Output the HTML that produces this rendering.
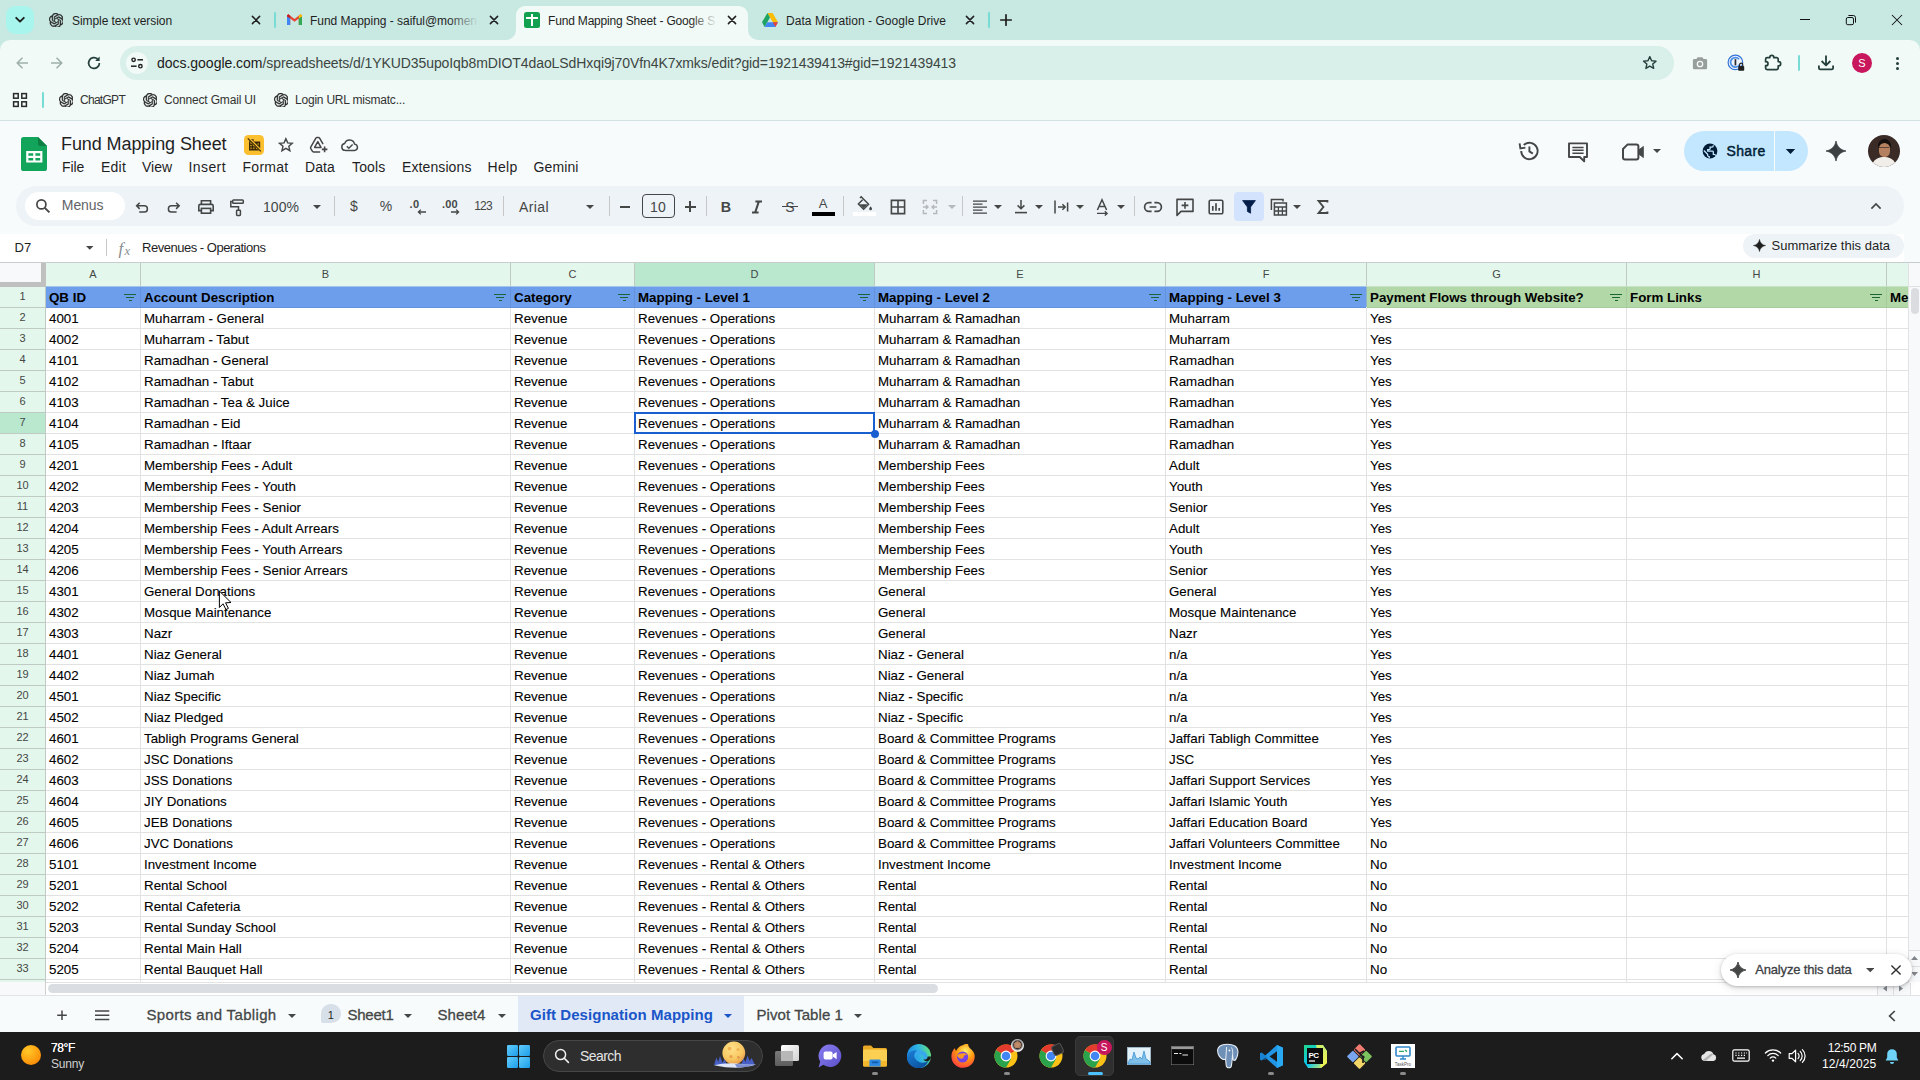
<!DOCTYPE html>
<html><head><meta charset="utf-8"><title>Fund Mapping Sheet - Google Sheets</title>
<style>
html,body{margin:0;padding:0;}
body{width:1920px;height:1080px;overflow:hidden;position:relative;background:#fff;font-family:"Liberation Sans",sans-serif;}
div,svg,.t{position:absolute;}
.t{white-space:pre;line-height:normal;}
.c{font-size:13.333px;color:#000;-webkit-text-stroke:0.1px #000;}
.h{font-size:13.333px;color:#000;font-weight:700;}
.n{font-size:11px;color:#444746;}
</style></head>
<body>
<div style="left:0px;top:0px;width:1920px;height:54px;background:#c8e8e2;"></div>
<div style="left:0px;top:40px;width:1920px;height:80px;background:#f1faf6;border-radius:10px 10px 0 0;"></div>
<div style="left:6px;top:6px;width:28px;height:28px;background:#a8f5ee;border-radius:9px;"></div>
<svg style="left:13px;top:14px;" width="14" height="12" viewBox="0 0 14 12"><path d="M3.2 3.8 L7 7.6 L10.8 3.8" fill="none" stroke="#1f1f1f" stroke-width="1.9" stroke-linecap="round" stroke-linejoin="round"/></svg>
<svg style="left:48.6px;top:12.6px;" width="14.8" height="14.8" viewBox="0 0 24 24"><path d="M22.2819 9.8211a5.9847 5.9847 0 0 0-.5157-4.9108 6.0462 6.0462 0 0 0-6.5098-2.9A6.0651 6.0651 0 0 0 4.9807 4.1818a5.9847 5.9847 0 0 0-3.9977 2.9 6.0462 6.0462 0 0 0 .7427 7.0966 5.98 5.98 0 0 0 .511 4.9107 6.051 6.051 0 0 0 6.5146 2.9001A5.9847 5.9847 0 0 0 13.2599 24a6.0557 6.0557 0 0 0 5.7718-4.2058 5.9894 5.9894 0 0 0 3.9977-2.9001 6.0557 6.0557 0 0 0-.7475-7.0729zm-9.022 12.6081a4.4755 4.4755 0 0 1-2.8764-1.0408l.1419-.0804 4.7783-2.7582a.7948.7948 0 0 0 .3927-.6813v-6.7369l2.02 1.1686a.071.071 0 0 1 .038.052v5.5826a4.504 4.504 0 0 1-4.4945 4.4944zm-9.6607-4.1254a4.4708 4.4708 0 0 1-.5346-3.0137l.142.0852 4.783 2.7582a.7712.7712 0 0 0 .7806 0l5.8428-3.3685v2.3324a.0804.0804 0 0 1-.0332.0615L9.74 19.9502a4.4992 4.4992 0 0 1-6.1408-1.6464zM2.3408 7.8956a4.485 4.485 0 0 1 2.3655-1.9728V11.6a.7664.7664 0 0 0 .3879.6765l5.8144 3.3543-2.0201 1.1685a.0757.0757 0 0 1-.071 0l-4.8303-2.7865A4.504 4.504 0 0 1 2.3408 7.872zm16.5963 3.8558L13.1038 8.364 15.1192 7.2a.0757.0757 0 0 1 .071 0l4.8303 2.7913a4.4944 4.4944 0 0 1-.6765 8.1042v-5.6772a.79.79 0 0 0-.407-.667zm2.0107-3.0231l-.142-.0852-4.7735-2.7818a.7759.7759 0 0 0-.7854 0L9.409 9.2297V6.8974a.0662.0662 0 0 1 .0284-.0615l4.8303-2.7866a4.4992 4.4992 0 0 1 6.6802 4.66zM8.3065 12.863l-2.02-1.1638a.0804.0804 0 0 1-.038-.0567V6.0742a4.4992 4.4992 0 0 1 7.3757-3.4537l-.142.0805L8.704 5.459a.7948.7948 0 0 0-.3927.6813zm1.0976-2.3654l2.602-1.4998 2.6069 1.4998v2.9994l-2.5974 1.4997-2.6067-1.4997Z" fill="#2b2b2b" stroke="#2b2b2b" stroke-width="0.55"/></svg>
<span class="t" style="left:72px;top:14px;font-size:12px;color:#1f1f1f;letter-spacing:-0.072px;">Simple text version</span>
<svg style="left:250px;top:14px;" width="12" height="12" viewBox="0 0 12 12"><path d="M2.4 2.4 L9.6 9.6 M9.6 2.4 L2.4 9.6" stroke="#1f1f1f" stroke-width="1.5" stroke-linecap="round"/></svg>
<div style="left:274px;top:12px;width:2px;height:16px;background:#78dbd4;border-radius:1px;"></div>
<svg style="left:287px;top:14px;" width="15" height="12" viewBox="0 0 15 12"><path d="M0 1.2 L0 11 L3.2 11 L3.2 4.6 L7.5 7.8 L11.8 4.6 L11.8 11 L15 11 L15 1.2 L13.6 0.3 L7.5 4.9 L1.4 0.3 Z" fill="#ea4335"/><rect x="0" y="2.4" width="3.2" height="8.6" fill="#4285f4"/><rect x="11.8" y="2.4" width="3.2" height="8.6" fill="#34a853"/><path d="M0 1.2 L1.4 0.3 L3.2 1.7 L3.2 4.6 L0 2.4Z" fill="#c5221f"/><path d="M15 1.2 L13.6 0.3 L11.8 1.7 L11.8 4.6 L15 2.4Z" fill="#fbbc04"/></svg>
<span class="t" style="left:310px;top:14px;font-size:12px;color:#1f1f1f;letter-spacing:-0.022px;">Fund Mapping - saiful@momen</span>
<div style="left:448px;top:8px;width:32px;height:24px;background:linear-gradient(90deg,rgba(200,232,226,0),#c8e8e2 95%);"></div>
<svg style="left:488px;top:14px;" width="12" height="12" viewBox="0 0 12 12"><path d="M2.4 2.4 L9.6 9.6 M9.6 2.4 L2.4 9.6" stroke="#1f1f1f" stroke-width="1.5" stroke-linecap="round"/></svg>
<div style="left:516px;top:6px;width:232px;height:34px;background:#f1faf6;border-radius:9px 9px 0 0;"></div>
<svg style="left:506px;top:30px;" width="10" height="10" viewBox="0 0 10 10"><path d="M10 0 L10 10 L0 10 A10 10 0 0 0 10 0Z" fill="#f1faf6"/></svg>
<svg style="left:748px;top:30px;" width="10" height="10" viewBox="0 0 10 10"><path d="M0 0 L0 10 L10 10 A10 10 0 0 1 0 0Z" fill="#f1faf6"/></svg>
<div style="left:524px;top:12px;width:16px;height:16px;background:#12a150;border-radius:2.5px;"></div>
<div style="left:530.8px;top:14px;width:2.3px;height:12px;background:#fff;"></div>
<div style="left:526.2px;top:16.7px;width:11.5px;height:2.2px;background:#fff;"></div>
<span class="t" style="left:548px;top:14px;font-size:12px;color:#1f1f1f;letter-spacing:-0.176px;">Fund Mapping Sheet - Google S</span>
<div style="left:690px;top:8px;width:30px;height:24px;background:linear-gradient(90deg,rgba(241,250,246,0),#f1faf6 92%);"></div>
<svg style="left:726px;top:14px;" width="12" height="12" viewBox="0 0 12 12"><path d="M2.4 2.4 L9.6 9.6 M9.6 2.4 L2.4 9.6" stroke="#1f1f1f" stroke-width="1.5" stroke-linecap="round"/></svg>
<svg style="left:762px;top:13px;" width="16" height="14" viewBox="0 0 16 14"><path d="M5.4 0 L10.6 0 L16 9.3 L10.8 9.3Z" fill="#fbbc04"/><path d="M5.4 0 L0 9.3 L2.65 14 L8 4.6Z" fill="#1ea362"/><path d="M2.65 14 L13.35 14 L16 9.3 L5.35 9.3Z" fill="#4285f4"/><path d="M10.8 9.3 L16 9.3 L13.35 14Z" fill="#ea4335"/></svg>
<span class="t" style="left:786px;top:14px;font-size:12px;color:#1f1f1f;letter-spacing:0.044px;">Data Migration - Google Drive</span>
<svg style="left:964px;top:14px;" width="12" height="12" viewBox="0 0 12 12"><path d="M2.4 2.4 L9.6 9.6 M9.6 2.4 L2.4 9.6" stroke="#1f1f1f" stroke-width="1.5" stroke-linecap="round"/></svg>
<div style="left:988px;top:12px;width:2px;height:16px;background:#78dbd4;border-radius:1px;"></div>
<svg style="left:999px;top:13px;" width="14" height="14" viewBox="0 0 14 14"><path d="M7 1.8 V12.2 M1.8 7 H12.2" stroke="#1f1f1f" stroke-width="1.7" stroke-linecap="round"/></svg>
<div style="left:1800px;top:19px;width:10px;height:1px;background:#111;"></div>
<svg style="left:1844px;top:13px;" width="14" height="14" viewBox="1844 13 14 14"><rect x="1846.3" y="17.5" width="7.2" height="7.2" rx="1.5" fill="none" stroke="#111" stroke-width="1"/><path d="M1848.4 15.5 H1853.3 A2.2 2.2 0 0 1 1855.5 17.7 V22.6" fill="none" stroke="#111" stroke-width="1"/></svg>
<svg style="left:1890px;top:13px;" width="14" height="14" viewBox="1890 13 14 14"><path d="M1892 15 L1902 25 M1902 15 L1892 25" stroke="#111" stroke-width="1.05"/></svg>
<svg style="left:16px;top:57px;" width="12" height="12" viewBox="0 0 12 12"><path d="M12 6 H1.5 M6 1.2 L1.2 6 L6 10.8" fill="none" stroke="#9fb0ab" stroke-width="1.6" stroke-linejoin="round" stroke-linecap="round"/></svg>
<svg style="left:51px;top:57px;" width="12" height="12" viewBox="0 0 12 12"><path d="M0 6 H10.5 M6 1.2 L10.8 6 L6 10.8" fill="none" stroke="#9fb0ab" stroke-width="1.6" stroke-linejoin="round" stroke-linecap="round"/></svg>
<svg style="left:86px;top:55px;" width="16" height="16" viewBox="0 0 16 16"><path d="M13.4 8 A5.4 5.4 0 1 1 11.6 4" fill="none" stroke="#243f3b" stroke-width="1.7"/><path d="M13.6 1.6 V6 H9.2Z" fill="#243f3b"/></svg>
<div style="left:120px;top:46px;width:1553.5px;height:34px;background:#d9efe9;border-radius:17px;"></div>
<div style="left:126px;top:52px;width:22px;height:22px;background:#f1faf6;border-radius:11px;"></div>
<svg style="left:130px;top:56px;" width="14" height="14" viewBox="0 0 14 14"><circle cx="3.6" cy="3.8" r="1.7" fill="none" stroke="#1f1f1f" stroke-width="1.4"/><path d="M7.4 3.8 H13" stroke="#1f1f1f" stroke-width="1.5"/><circle cx="10.4" cy="10.2" r="1.7" fill="none" stroke="#1f1f1f" stroke-width="1.4"/><path d="M1 10.2 H6.6" stroke="#1f1f1f" stroke-width="1.5"/></svg>
<span class="t" style="left:157px;top:55px;font-size:14px;color:#1a1a1a;letter-spacing:-0.023px;">docs.google.com</span>
<span class="t" style="left:262.5px;top:55px;font-size:14px;color:#3c4643;letter-spacing:-0.090px;">/spreadsheets/d/1YKUD35upoIqb8mDIOT4daoLSdHxqi9j70Vfn4K7xmks/edit?gid=1921439413#gid=1921439413</span>
<svg style="left:1642.4px;top:55.4px;" width="15.6" height="15.6" viewBox="0 0 18 18"><path d="M9 1.9 L11.1 6.6 L16.2 7.1 L12.4 10.5 L13.5 15.5 L9 12.9 L4.5 15.5 L5.6 10.5 L1.8 7.1 L6.9 6.6Z" fill="none" stroke="#243f3b" stroke-width="1.6" stroke-linejoin="round"/></svg>
<svg style="left:1691px;top:55px;" width="18" height="16" viewBox="1691 55 18 16"><path d="M1694.2 59 H1696.4 L1697.6 57.2 H1702.4 L1703.6 59 H1705.8 A1.3 1.3 0 0 1 1707.1 60.3 V68 A1.3 1.3 0 0 1 1705.8 69.3 H1694.2 A1.3 1.3 0 0 1 1692.9 68 V60.3 A1.3 1.3 0 0 1 1694.2 59Z" fill="#989e9c"/><circle cx="1700" cy="64" r="2.7" fill="none" stroke="#f1faf6" stroke-width="1.3"/></svg>
<svg style="left:1726px;top:53px;" width="20" height="20" viewBox="1726 53 20 20"><circle cx="1735.4" cy="62.4" r="7.3" fill="#eef4ff" stroke="#3574d8" stroke-width="1.2"/><path d="M1739 59.2 A4.8 4.8 0 1 0 1739.6 64.6" fill="none" stroke="#4a8fe6" stroke-width="1.7"/><rect x="1734.6" y="59.2" width="1.7" height="6.2" fill="#2b2b2b"/><rect x="1738.2" y="65.9" width="6" height="4.9" rx="0.8" fill="#202020"/><path d="M1739.6 66 V64.7 A1.6 1.6 0 0 1 1742.8 64.7 V66" fill="none" stroke="#202020" stroke-width="1.1"/></svg>
<svg style="left:1763px;top:52px;" width="20" height="20" viewBox="1763 52 20 20"><path d="M1767.2 57.7 H1769.8 V57.3 A2 2 0 0 1 1773.8 57.3 V57.7 H1776.6 A1.6 1.6 0 0 1 1778.2 59.3 V61.6 H1778.6 A2.1 2.1 0 0 1 1778.6 65.8 H1778.2 V68 A1.6 1.6 0 0 1 1776.6 69.6 H1767.2 A1.6 1.6 0 0 1 1765.6 68 V65.7 H1766 A2 2 0 0 0 1766 61.7 H1765.6 V59.3 A1.6 1.6 0 0 1 1767.2 57.7Z" fill="none" stroke="#243f3b" stroke-width="1.7" stroke-linejoin="round"/></svg>
<div style="left:1798px;top:55px;width:2px;height:16px;background:#78dbd4;border-radius:1px;"></div>
<svg style="left:1816px;top:53px;" width="20" height="20" viewBox="1816 53 20 20"><path d="M1826 55.4 V65 M1821.6 61 L1826 65.4 L1830.4 61" fill="none" stroke="#243f3b" stroke-width="1.8" stroke-linejoin="round"/><path d="M1818.9 65.6 V68 A1.4 1.4 0 0 0 1820.3 69.4 H1831.7 A1.4 1.4 0 0 0 1833.1 68 V65.6" fill="none" stroke="#243f3b" stroke-width="1.8"/></svg>
<div style="left:1852px;top:53px;width:20px;height:20px;background:#c8175d;border-radius:10px;"></div>
<span class="t" style="left:1858.33px;top:57px;font-size:11px;color:#fff;">S</span>
<div style="left:1896.4px;top:56.7px;width:2.9px;height:2.9px;background:#243f3b;border-radius:2px;"></div>
<div style="left:1896.4px;top:61.800000000000004px;width:2.9px;height:2.9px;background:#243f3b;border-radius:2px;"></div>
<div style="left:1896.4px;top:66.9px;width:2.9px;height:2.9px;background:#243f3b;border-radius:2px;"></div>
<svg style="left:12px;top:92px;" width="16" height="16" viewBox="0 0 16 16"><g fill="none" stroke="#2a2a2a" stroke-width="1.5"><rect x="1.6" y="1.6" width="4.6" height="4.6"/><rect x="9.8" y="1.6" width="4.6" height="4.6"/><rect x="1.6" y="9.8" width="4.6" height="4.6"/><rect x="9.8" y="9.8" width="4.6" height="4.6"/></g></svg>
<div style="left:42px;top:92px;width:2px;height:16px;background:#78dbd4;border-radius:1px;"></div>
<svg style="left:58.6px;top:92.6px;" width="14.8" height="14.8" viewBox="0 0 24 24"><path d="M22.2819 9.8211a5.9847 5.9847 0 0 0-.5157-4.9108 6.0462 6.0462 0 0 0-6.5098-2.9A6.0651 6.0651 0 0 0 4.9807 4.1818a5.9847 5.9847 0 0 0-3.9977 2.9 6.0462 6.0462 0 0 0 .7427 7.0966 5.98 5.98 0 0 0 .511 4.9107 6.051 6.051 0 0 0 6.5146 2.9001A5.9847 5.9847 0 0 0 13.2599 24a6.0557 6.0557 0 0 0 5.7718-4.2058 5.9894 5.9894 0 0 0 3.9977-2.9001 6.0557 6.0557 0 0 0-.7475-7.0729zm-9.022 12.6081a4.4755 4.4755 0 0 1-2.8764-1.0408l.1419-.0804 4.7783-2.7582a.7948.7948 0 0 0 .3927-.6813v-6.7369l2.02 1.1686a.071.071 0 0 1 .038.052v5.5826a4.504 4.504 0 0 1-4.4945 4.4944zm-9.6607-4.1254a4.4708 4.4708 0 0 1-.5346-3.0137l.142.0852 4.783 2.7582a.7712.7712 0 0 0 .7806 0l5.8428-3.3685v2.3324a.0804.0804 0 0 1-.0332.0615L9.74 19.9502a4.4992 4.4992 0 0 1-6.1408-1.6464zM2.3408 7.8956a4.485 4.485 0 0 1 2.3655-1.9728V11.6a.7664.7664 0 0 0 .3879.6765l5.8144 3.3543-2.0201 1.1685a.0757.0757 0 0 1-.071 0l-4.8303-2.7865A4.504 4.504 0 0 1 2.3408 7.872zm16.5963 3.8558L13.1038 8.364 15.1192 7.2a.0757.0757 0 0 1 .071 0l4.8303 2.7913a4.4944 4.4944 0 0 1-.6765 8.1042v-5.6772a.79.79 0 0 0-.407-.667zm2.0107-3.0231l-.142-.0852-4.7735-2.7818a.7759.7759 0 0 0-.7854 0L9.409 9.2297V6.8974a.0662.0662 0 0 1 .0284-.0615l4.8303-2.7866a4.4992 4.4992 0 0 1 6.6802 4.66zM8.3065 12.863l-2.02-1.1638a.0804.0804 0 0 1-.038-.0567V6.0742a4.4992 4.4992 0 0 1 7.3757-3.4537l-.142.0805L8.704 5.459a.7948.7948 0 0 0-.3927.6813zm1.0976-2.3654l2.602-1.4998 2.6069 1.4998v2.9994l-2.5974 1.4997-2.6067-1.4997Z" fill="#2b2b2b" stroke="#2b2b2b" stroke-width="0.55"/></svg>
<span class="t" style="left:80px;top:93px;font-size:12px;color:#333;letter-spacing:-0.717px;">ChatGPT</span>
<svg style="left:142.6px;top:92.6px;" width="14.8" height="14.8" viewBox="0 0 24 24"><path d="M22.2819 9.8211a5.9847 5.9847 0 0 0-.5157-4.9108 6.0462 6.0462 0 0 0-6.5098-2.9A6.0651 6.0651 0 0 0 4.9807 4.1818a5.9847 5.9847 0 0 0-3.9977 2.9 6.0462 6.0462 0 0 0 .7427 7.0966 5.98 5.98 0 0 0 .511 4.9107 6.051 6.051 0 0 0 6.5146 2.9001A5.9847 5.9847 0 0 0 13.2599 24a6.0557 6.0557 0 0 0 5.7718-4.2058 5.9894 5.9894 0 0 0 3.9977-2.9001 6.0557 6.0557 0 0 0-.7475-7.0729zm-9.022 12.6081a4.4755 4.4755 0 0 1-2.8764-1.0408l.1419-.0804 4.7783-2.7582a.7948.7948 0 0 0 .3927-.6813v-6.7369l2.02 1.1686a.071.071 0 0 1 .038.052v5.5826a4.504 4.504 0 0 1-4.4945 4.4944zm-9.6607-4.1254a4.4708 4.4708 0 0 1-.5346-3.0137l.142.0852 4.783 2.7582a.7712.7712 0 0 0 .7806 0l5.8428-3.3685v2.3324a.0804.0804 0 0 1-.0332.0615L9.74 19.9502a4.4992 4.4992 0 0 1-6.1408-1.6464zM2.3408 7.8956a4.485 4.485 0 0 1 2.3655-1.9728V11.6a.7664.7664 0 0 0 .3879.6765l5.8144 3.3543-2.0201 1.1685a.0757.0757 0 0 1-.071 0l-4.8303-2.7865A4.504 4.504 0 0 1 2.3408 7.872zm16.5963 3.8558L13.1038 8.364 15.1192 7.2a.0757.0757 0 0 1 .071 0l4.8303 2.7913a4.4944 4.4944 0 0 1-.6765 8.1042v-5.6772a.79.79 0 0 0-.407-.667zm2.0107-3.0231l-.142-.0852-4.7735-2.7818a.7759.7759 0 0 0-.7854 0L9.409 9.2297V6.8974a.0662.0662 0 0 1 .0284-.0615l4.8303-2.7866a4.4992 4.4992 0 0 1 6.6802 4.66zM8.3065 12.863l-2.02-1.1638a.0804.0804 0 0 1-.038-.0567V6.0742a4.4992 4.4992 0 0 1 7.3757-3.4537l-.142.0805L8.704 5.459a.7948.7948 0 0 0-.3927.6813zm1.0976-2.3654l2.602-1.4998 2.6069 1.4998v2.9994l-2.5974 1.4997-2.6067-1.4997Z" fill="#2b2b2b" stroke="#2b2b2b" stroke-width="0.55"/></svg>
<span class="t" style="left:164px;top:93px;font-size:12px;color:#333;letter-spacing:-0.169px;">Connect Gmail UI</span>
<svg style="left:273.6px;top:92.6px;" width="14.8" height="14.8" viewBox="0 0 24 24"><path d="M22.2819 9.8211a5.9847 5.9847 0 0 0-.5157-4.9108 6.0462 6.0462 0 0 0-6.5098-2.9A6.0651 6.0651 0 0 0 4.9807 4.1818a5.9847 5.9847 0 0 0-3.9977 2.9 6.0462 6.0462 0 0 0 .7427 7.0966 5.98 5.98 0 0 0 .511 4.9107 6.051 6.051 0 0 0 6.5146 2.9001A5.9847 5.9847 0 0 0 13.2599 24a6.0557 6.0557 0 0 0 5.7718-4.2058 5.9894 5.9894 0 0 0 3.9977-2.9001 6.0557 6.0557 0 0 0-.7475-7.0729zm-9.022 12.6081a4.4755 4.4755 0 0 1-2.8764-1.0408l.1419-.0804 4.7783-2.7582a.7948.7948 0 0 0 .3927-.6813v-6.7369l2.02 1.1686a.071.071 0 0 1 .038.052v5.5826a4.504 4.504 0 0 1-4.4945 4.4944zm-9.6607-4.1254a4.4708 4.4708 0 0 1-.5346-3.0137l.142.0852 4.783 2.7582a.7712.7712 0 0 0 .7806 0l5.8428-3.3685v2.3324a.0804.0804 0 0 1-.0332.0615L9.74 19.9502a4.4992 4.4992 0 0 1-6.1408-1.6464zM2.3408 7.8956a4.485 4.485 0 0 1 2.3655-1.9728V11.6a.7664.7664 0 0 0 .3879.6765l5.8144 3.3543-2.0201 1.1685a.0757.0757 0 0 1-.071 0l-4.8303-2.7865A4.504 4.504 0 0 1 2.3408 7.872zm16.5963 3.8558L13.1038 8.364 15.1192 7.2a.0757.0757 0 0 1 .071 0l4.8303 2.7913a4.4944 4.4944 0 0 1-.6765 8.1042v-5.6772a.79.79 0 0 0-.407-.667zm2.0107-3.0231l-.142-.0852-4.7735-2.7818a.7759.7759 0 0 0-.7854 0L9.409 9.2297V6.8974a.0662.0662 0 0 1 .0284-.0615l4.8303-2.7866a4.4992 4.4992 0 0 1 6.6802 4.66zM8.3065 12.863l-2.02-1.1638a.0804.0804 0 0 1-.038-.0567V6.0742a4.4992 4.4992 0 0 1 7.3757-3.4537l-.142.0805L8.704 5.459a.7948.7948 0 0 0-.3927.6813zm1.0976-2.3654l2.602-1.4998 2.6069 1.4998v2.9994l-2.5974 1.4997-2.6067-1.4997Z" fill="#2b2b2b" stroke="#2b2b2b" stroke-width="0.55"/></svg>
<span class="t" style="left:295px;top:93px;font-size:12px;color:#333;letter-spacing:-0.213px;">Login URL mismatc...</span>
<div style="left:0px;top:120px;width:1920px;height:1px;background:#d3e3e4;"></div>
<div style="left:0px;top:121px;width:1920px;height:142px;background:#f8fbfc;"></div>
<svg style="left:21px;top:137px;" width="26" height="34" viewBox="0 0 26 34"><path d="M2.6 0 H17 L26 9 V31.4 A2.6 2.6 0 0 1 23.4 34 H2.6 A2.6 2.6 0 0 1 0 31.4 V2.6 A2.6 2.6 0 0 1 2.6 0Z" fill="#12a45a"/><path d="M17 0 L26 9 H19.6 A2.6 2.6 0 0 1 17 6.4Z" fill="#0c8043"/><path d="M5.2 14 H21.4 V25.6 H5.2Z M7.4 16.2 V18.7 H12.2 V16.2Z M14.4 16.2 V18.7 H19.2 V16.2Z M7.4 20.9 V23.4 H12.2 V20.9Z M14.4 20.9 V23.4 H19.2 V20.9Z" fill="#fff" fill-rule="evenodd"/></svg>
<span class="t" style="left:61px;top:134px;font-size:18px;color:#1f1f1f;letter-spacing:-0.090px;">Fund Mapping Sheet</span>
<div style="left:244px;top:134.6px;width:20.1px;height:20px;background:#fbbf30;border-radius:4.5px;"></div>
<svg style="left:246.5px;top:137.4px;" width="15.5" height="15.5" viewBox="0 0 15.5 15.5"><path d="M2 2.2 H6.6 V4.4 H13.2 V13.4 H2Z" fill="#3b2a05"/><g fill="#fbbf30"><rect x="3.4" y="5.4" width="1.2" height="1.2"/><rect x="3.4" y="8" width="1.2" height="1.2"/><rect x="3.4" y="10.6" width="1.2" height="1.2"/><rect x="6.2" y="8" width="1.2" height="1.2"/><rect x="6.2" y="10.6" width="1.2" height="1.2"/><rect x="9" y="10.6" width="1.2" height="1.2"/><rect x="10.6" y="6.4" width="1.2" height="1.2"/></g><path d="M0.6 0.4 L14.6 14.4" stroke="#fbbf30" stroke-width="2.6"/><path d="M0.8 1.4 L13.8 14.4" stroke="#3b2a05" stroke-width="1.2"/></svg>
<svg style="left:278.1px;top:137.1px;" width="15.8" height="15.8" viewBox="0 0 17 17"><path d="M8.5 1.9 L10.45 6.35 L15.3 6.8 L11.65 10 L12.75 14.75 L8.5 12.25 L4.25 14.75 L5.35 10 L1.7 6.8 L6.55 6.35Z" fill="none" stroke="#444746" stroke-width="1.55" stroke-linejoin="miter"/></svg>
<svg style="left:308.6px;top:135.8px;" width="20" height="18" viewBox="0 0 20 18"><path d="M13.8 7.6 L10.6 2.2 Q10.2 1.6 9.5 1.6 H8 Q7.3 1.6 6.9 2.2 L1.7 11.2 Q1.4 11.8 1.7 12.4 L3.3 15.2 Q3.7 15.9 4.5 15.9 H10.6" fill="none" stroke="#444746" stroke-width="1.5" stroke-linejoin="round" stroke-linecap="round"/><path d="M8.8 5.6 L5.6 11.4 H12 Z" fill="none" stroke="#444746" stroke-width="1.5" stroke-linejoin="round" stroke-linecap="round"/><path d="M15.6 10.6 V16.2 M12.8 13.4 H18.4" stroke="#444746" stroke-width="1.6"/></svg>
<svg style="left:340.2px;top:138px;" width="20" height="14" viewBox="0 0 20 14"><path d="M5.2 12.4 A3.5 3.5 0 0 1 4.7 5.45 A5.1 5.1 0 0 1 14.5 6.1 A3.2 3.2 0 0 1 15 12.4Z" fill="none" stroke="#444746" stroke-width="1.45" stroke-linejoin="round"/><path d="M6.8 8.3 L8.8 10.2 L12.6 6.4" fill="none" stroke="#444746" stroke-width="1.45"/></svg>
<span class="t" style="left:62px;top:159px;font-size:14px;color:#1f1f1f;letter-spacing:-0.066px;">File</span>
<span class="t" style="left:101px;top:159px;font-size:14px;color:#1f1f1f;letter-spacing:0.219px;">Edit</span>
<span class="t" style="left:142px;top:159px;font-size:14px;color:#1f1f1f;letter-spacing:-0.023px;">View</span>
<span class="t" style="left:188.5px;top:159px;font-size:14px;color:#1f1f1f;letter-spacing:0.414px;">Insert</span>
<span class="t" style="left:242.5px;top:159px;font-size:14px;color:#1f1f1f;letter-spacing:0.276px;">Format</span>
<span class="t" style="left:305px;top:159px;font-size:14px;color:#1f1f1f;letter-spacing:0.105px;">Data</span>
<span class="t" style="left:352px;top:159px;font-size:14px;color:#1f1f1f;letter-spacing:0.163px;">Tools</span>
<span class="t" style="left:402px;top:159px;font-size:14px;color:#1f1f1f;letter-spacing:0.102px;">Extensions</span>
<span class="t" style="left:487.5px;top:159px;font-size:14px;color:#1f1f1f;letter-spacing:0.301px;">Help</span>
<span class="t" style="left:533.5px;top:159px;font-size:14px;color:#1f1f1f;letter-spacing:0.107px;">Gemini</span>
<svg style="left:1517px;top:139px;" width="24" height="24" viewBox="0 0 24 24"><path d="M4.2 12 A8.2 8.2 0 1 0 6.8 6" fill="none" stroke="#444746" stroke-width="1.9"/><path d="M2.6 4.4 L3.4 9.4 L8.4 8.6" fill="none" stroke="#444746" stroke-width="1.9"/><path d="M12.4 7.6 V12.4 L15.8 14.6" fill="none" stroke="#444746" stroke-width="1.9"/></svg>
<svg style="left:1567px;top:141px;" width="22" height="22" viewBox="0 0 22 22"><path d="M2 2.4 H20 V16 H17.2 V20.4 L12.8 16 H2Z" fill="none" stroke="#444746" stroke-width="1.9" stroke-linejoin="round"/><path d="M5.4 6.4 H16.6 M5.4 9.3 H16.6 M5.4 12.2 H16.6" stroke="#444746" stroke-width="1.5"/></svg>
<svg style="left:1620px;top:140px;" width="26" height="24" viewBox="1620 140 26 24"><path d="M1627.4 144.6 H1636.4 A2 2 0 0 1 1638.4 146.6 V157.4 A2 2 0 0 1 1636.4 159.4 H1625 A2 2 0 0 1 1623 157.4 V149 Z" fill="none" stroke="#444746" stroke-width="2" stroke-linejoin="round"/><path d="M1638.6 150 L1643.4 146.4 V157.6 L1638.6 154Z" fill="#444746" stroke="#444746" stroke-width="0.8" stroke-linejoin="round"/></svg>
<svg style="left:1652px;top:148px;" width="10" height="6" viewBox="0 0 10 6"><path d="M1 1 H9 L5 5Z" fill="#444746"/></svg>
<div style="left:1684px;top:131px;width:124px;height:40px;background:#c2e7ff;border-radius:20px;"></div>
<div style="left:1774px;top:131px;width:1px;height:40px;background:#f8fbfc;"></div>
<svg style="left:1701px;top:142px;" width="18" height="18" viewBox="0 0 18 18"><circle cx="9" cy="9" r="7.4" fill="#001d35"/><path d="M8.2 16 V14.6 C7.3 14.6 6.6 13.9 6.6 13 V12.2 L2.9 8.5 M14.7 13.6 C14.5 12.9 13.9 12.4 13.1 12.4 H12.3 V10 C12.3 9.6 12 9.2 11.5 9.2 H6.7 V7.6 H8.3 C8.7 7.6 9.1 7.3 9.1 6.8 V5.2 H10.7 C11.6 5.2 12.3 4.5 12.3 3.6 V3.2" fill="none" stroke="#c2e7ff" stroke-width="1.3"/></svg>
<span class="t" style="left:1726.5px;top:143px;font-size:14px;color:#001d35;letter-spacing:0.328px;-webkit-text-stroke:0.45px #001d35;">Share</span>
<svg style="left:1785px;top:148px;" width="11" height="7" viewBox="0 0 11 7"><path d="M0.8 1 H10.2 L5.5 6Z" fill="#001d35"/></svg>
<svg style="left:1826px;top:141px;" width="20" height="20" viewBox="0 0 20 20"><path d="M10 0 C10.9 5.4 14.6 9.1 20 10 C14.6 10.9 10.9 14.6 10 20 C9.1 14.6 5.4 10.9 0 10 C5.4 9.1 9.1 5.4 10 0Z" fill="#3c4043" stroke="#3c4043" stroke-width="0.8" stroke-linejoin="round"/></svg>
<div style="left:1868px;top:135px;width:32px;height:32px;background:#3a2b26;border-radius:16px;overflow:hidden;"><div style="left:3px;top:22px;width:26px;height:14px;border-radius:12px 12px 0 0;background:#f1eeea"></div><div style="left:9.5px;top:4px;width:13px;height:9px;border-radius:7px 7px 2px 2px;background:#15100e"></div><div style="left:10.5px;top:7.5px;width:11px;height:14px;border-radius:5.5px;background:#b5805f"></div><div style="left:11px;top:11.5px;width:10px;height:1.6px;background:#3a2a24;opacity:.7"></div></div>
<div style="left:16px;top:186px;width:1888px;height:40px;background:#eef3f7;border-radius:20px;"></div>
<div style="left:25px;top:192px;width:100px;height:28px;background:#fff;border-radius:14px;"></div>
<svg style="left:35px;top:198px;" width="16" height="16" viewBox="0 0 16 16"><circle cx="6.4" cy="6.4" r="4.5" fill="none" stroke="#444746" stroke-width="1.7"/><path d="M9.8 9.8 L14.4 14.4" stroke="#444746" stroke-width="1.9"/></svg>
<span class="t" style="left:61.8px;top:197.4px;font-size:14px;color:#5f6368;letter-spacing:-0.066px;">Menus</span>
<svg style="left:134px;top:199px;" width="16" height="17" viewBox="134 199 16 17"><path d="M139.7 202.7 L136.6 205.8 L139.7 208.9 M136.9 205.8 H144.3 A3.1 3.1 0 0 1 144.3 212 H139.2" fill="none" stroke="#444746" stroke-width="1.5"/></svg>
<svg style="left:166px;top:199px;" width="16" height="17" viewBox="166 199 16 17"><path d="M176.1 202.7 L179.2 205.8 L176.1 208.9 M178.9 205.8 H171.5 A3.1 3.1 0 0 0 171.5 212 H176.6" fill="none" stroke="#444746" stroke-width="1.5"/></svg>
<svg style="left:196px;top:198px;" width="20" height="18" viewBox="196 198 20 18"><path d="M201.4 204.4 V200.8 H210.6 V204.4" fill="none" stroke="#444746" stroke-width="1.6"/><path d="M201.2 210.6 H198.8 V206 A1.6 1.6 0 0 1 200.4 204.4 H211.6 A1.6 1.6 0 0 1 213.2 206 V210.6 H210.8" fill="none" stroke="#444746" stroke-width="1.6"/><rect x="201.4" y="208.4" width="9.2" height="4.8" fill="none" stroke="#444746" stroke-width="1.6"/></svg>
<svg style="left:228px;top:197px;" width="18" height="21" viewBox="228 197 18 21"><rect x="232.7" y="199.9" width="10.6" height="3.4" rx="0.8" fill="none" stroke="#444746" stroke-width="1.5"/><path d="M232.6 201.6 H230.8 V206.7 H238.5 V210" fill="none" stroke="#444746" stroke-width="1.5"/><rect x="236.6" y="210.2" width="3.8" height="5.2" rx="0.6" fill="none" stroke="#444746" stroke-width="1.5"/></svg>
<span class="t" style="left:263px;top:199px;font-size:14px;color:#444746;letter-spacing:0.047px;">100%</span>
<svg style="left:313.0px;top:205.0px;" width="8" height="4.5" viewBox="0 0 8 4.5"><path d="M0 0 H8 L4.0 4.0Z" fill="#444746"/></svg>
<div style="left:334px;top:196px;width:1px;height:20px;background:#c7c7c7;"></div>
<span class="t" style="left:350.1px;top:197.5px;font-size:14px;color:#444746;">$</span>
<span class="t" style="left:379.77px;top:197.5px;font-size:14px;color:#444746;">%</span>
<span class="t" style="left:409.6px;top:198px;font-size:11px;color:#444746;font-weight:700;letter-spacing:0.406px;">.0</span>
<svg style="left:417px;top:208px;" width="10" height="8" viewBox="0 0 10 8"><path d="M9 4 H1.6 M3.8 1.6 L1.4 4 L3.8 6.4" fill="none" stroke="#444746" stroke-width="1.3"/></svg>
<span class="t" style="left:441.9px;top:198px;font-size:11px;color:#444746;font-weight:700;letter-spacing:0.234px;">.00</span>
<svg style="left:449.5px;top:208px;" width="10" height="8" viewBox="0 0 10 8"><path d="M1 4 H8.4 M6.2 1.6 L8.6 4 L6.2 6.4" fill="none" stroke="#444746" stroke-width="1.3"/></svg>
<span class="t" style="left:474.2px;top:199px;font-size:12px;color:#444746;letter-spacing:-0.777px;">123</span>
<div style="left:503px;top:196px;width:1px;height:20px;background:#c7c7c7;"></div>
<span class="t" style="left:519px;top:198.5px;font-size:14px;color:#444746;letter-spacing:0.397px;">Arial</span>
<svg style="left:586.0px;top:205.0px;" width="8" height="4.5" viewBox="0 0 8 4.5"><path d="M0 0 H8 L4.0 4.0Z" fill="#444746"/></svg>
<div style="left:609px;top:196px;width:1px;height:20px;background:#c7c7c7;"></div>
<div style="left:620px;top:206px;width:10px;height:1.6px;background:#444746;"></div>
<div style="left:641.5px;top:194px;width:33px;height:24px;border:1px solid #444746;border-radius:4px;box-sizing:border-box;"></div>
<span class="t" style="left:650px;top:198.5px;font-size:14px;color:#444746;letter-spacing:0.211px;">10</span>
<div style="left:684.5px;top:206px;width:11px;height:1.6px;background:#444746;"></div>
<div style="left:689.2px;top:201.3px;width:1.6px;height:11px;background:#444746;"></div>
<div style="left:706px;top:196px;width:1px;height:20px;background:#c7c7c7;"></div>
<span class="t" style="left:720.74px;top:198.7px;font-size:14.3px;color:#444746;font-weight:700;">B</span>
<svg style="left:750px;top:200px;" width="14" height="14" viewBox="0 0 14 14"><path d="M5.4 1.4 H12 M2 12.6 H8.6 M8.9 1.4 L5.1 12.6" fill="none" stroke="#444746" stroke-width="2"/></svg>
<span class="t" style="left:785.33px;top:198.5px;font-size:14px;color:#444746;">S</span>
<div style="left:782px;top:205.6px;width:16px;height:1.4px;background:#444746;"></div>
<span class="t" style="left:818.66px;top:196.4px;font-size:13px;color:#444746;">A</span>
<div style="left:812px;top:212px;width:23px;height:3.7px;background:#000;"></div>
<div style="left:843px;top:196px;width:1px;height:20px;background:#c7c7c7;"></div>
<svg style="left:855px;top:195px;" width="20" height="22" viewBox="0 0 20 22"><path d="M5 3 L6.2 1.8 L13.6 9.2 L8.6 14.2 L3.4 9 L7.6 4.8" fill="none" stroke="#444746" stroke-width="1.5"/><path d="M4.6 9.3 H12.6 L8.6 13.2Z" fill="#444746"/><path d="M15.6 11.2 C16.6 12.6 17 13.2 17 13.9 A1.4 1.4 0 0 1 14.2 13.9 C14.2 13.2 14.6 12.6 15.6 11.2Z" fill="#444746"/></svg>
<div style="left:853px;top:212px;width:23px;height:3.7px;background:#fff;"></div>
<svg style="left:889px;top:198px;" width="18" height="18" viewBox="0 0 18 18"><path d="M2.4 2.4 H15.6 V15.6 H2.4Z M9 2.4 V15.6 M2.4 9 H15.6" fill="none" stroke="#444746" stroke-width="1.6"/></svg>
<svg style="left:921px;top:198px;" width="18" height="18" viewBox="0 0 18 18"><path d="M2.4 6 V2.4 H6 M12 2.4 H15.6 V6 M15.6 12 V15.6 H12 M6 15.6 H2.4 V12" fill="none" stroke="#b4b8bd" stroke-width="1.5"/><path d="M2 9 H7 M5 7 L7 9 L5 11 M16 9 H11 M13 7 L11 9 L13 11" fill="none" stroke="#b4b8bd" stroke-width="1.4"/></svg>
<svg style="left:947.5px;top:205.0px;" width="8" height="4.5" viewBox="0 0 8 4.5"><path d="M0 0 H8 L4.0 4.0Z" fill="#b4b8bd"/></svg>
<div style="left:962px;top:196px;width:1px;height:20px;background:#c7c7c7;"></div>
<svg style="left:972px;top:199px;" width="16" height="16" viewBox="0 0 16 16"><path d="M1 2.2 H15 M1 5.2 H10.5 M1 8.2 H15 M1 11.2 H10.5 M1 14.2 H15" stroke="#444746" stroke-width="1.3"/></svg>
<svg style="left:994.0px;top:205.0px;" width="8" height="4.5" viewBox="0 0 8 4.5"><path d="M0 0 H8 L4.0 4.0Z" fill="#444746"/></svg>
<svg style="left:1013px;top:199px;" width="16" height="16" viewBox="0 0 16 16"><path d="M8 1 V9.4 M4.6 6.4 L8 9.8 L11.4 6.4" fill="none" stroke="#444746" stroke-width="1.5"/><path d="M2 13.6 H14" stroke="#444746" stroke-width="1.6"/></svg>
<svg style="left:1034.5px;top:205.0px;" width="8" height="4.5" viewBox="0 0 8 4.5"><path d="M0 0 H8 L4.0 4.0Z" fill="#444746"/></svg>
<svg style="left:1053px;top:199px;" width="17" height="16" viewBox="0 0 17 16"><path d="M2 1.4 V14.6 M14.6 3.4 V12.6" stroke="#444746" stroke-width="1.5"/><path d="M5 8 H12 M9.4 5.2 L12.2 8 L9.4 10.8" fill="none" stroke="#444746" stroke-width="1.5"/></svg>
<svg style="left:1076.0px;top:205.0px;" width="8" height="4.5" viewBox="0 0 8 4.5"><path d="M0 0 H8 L4.0 4.0Z" fill="#444746"/></svg>
<svg style="left:1094px;top:198px;" width="18" height="18" viewBox="0 0 18 18"><path d="M3.4 12 L8 1.8 L12.6 12 M5 8.6 H11" fill="none" stroke="#444746" stroke-width="1.5"/><path d="M3 15.4 H13 M10.8 13.2 L13.2 15.4 L10.8 17.6" fill="none" stroke="#444746" stroke-width="1.3"/></svg>
<svg style="left:1116.5px;top:205.0px;" width="8" height="4.5" viewBox="0 0 8 4.5"><path d="M0 0 H8 L4.0 4.0Z" fill="#444746"/></svg>
<div style="left:1134px;top:196px;width:1px;height:20px;background:#c7c7c7;"></div>
<svg style="left:1143px;top:199px;" width="20" height="16" viewBox="0 0 20 16"><path d="M8.6 3.6 H6 A4.4 4.4 0 0 0 6 12.4 H8.6 M11.4 3.6 H14 A4.4 4.4 0 0 1 14 12.4 H11.4 M6.6 8 H13.4" fill="none" stroke="#444746" stroke-width="1.7"/></svg>
<svg style="left:1175px;top:197px;" width="20" height="20" viewBox="0 0 20 20"><path d="M2 2.4 H18 V14.4 H6 L2 18.4Z" fill="none" stroke="#444746" stroke-width="1.6" stroke-linejoin="round"/><path d="M10 5 V11.8 M6.6 8.4 H13.4" stroke="#444746" stroke-width="1.6"/></svg>
<svg style="left:1207px;top:198px;" width="18" height="18" viewBox="0 0 18 18"><rect x="2.2" y="2.2" width="13.6" height="13.6" rx="1.4" fill="none" stroke="#444746" stroke-width="1.6"/><path d="M5.8 12.8 V8 M9 12.8 V5.2 M12.2 12.8 V10" stroke="#444746" stroke-width="1.7"/></svg>
<div style="left:1234px;top:191.5px;width:30px;height:29px;background:#d3e3fd;border-radius:4px;"></div>
<svg style="left:1241px;top:199px;" width="16" height="16" viewBox="0 0 16 16"><path d="M1.6 1.6 H14.4 L9.6 8 V14.2 L6.4 12.4 V8Z" fill="#041e49" stroke="#041e49" stroke-width="0.8" stroke-linejoin="round"/></svg>
<svg style="left:1269px;top:197px;" width="20" height="20" viewBox="0 0 20 20"><path d="M2.4 13 V2.4 H14 V4.6" fill="none" stroke="#444746" stroke-width="1.5"/><rect x="5.4" y="6" width="12" height="12" fill="none" stroke="#444746" stroke-width="1.5"/><path d="M5.4 10 H17.4 M5.4 14 H17.4 M9.4 10 V18 M13.4 10 V18" stroke="#444746" stroke-width="1.3"/></svg>
<svg style="left:1292.5px;top:205.0px;" width="8" height="4.5" viewBox="0 0 8 4.5"><path d="M0 0 H8 L4.0 4.0Z" fill="#444746"/></svg>
<svg style="left:1316px;top:199px;" width="14" height="16" viewBox="0 0 14 16"><path d="M11.4 3.6 V2 H2.6 L7.4 8 L2.6 14 H11.4 V12.4" fill="none" stroke="#444746" stroke-width="1.9" stroke-linejoin="miter"/></svg>
<svg style="left:1870px;top:202px;" width="12" height="8" viewBox="0 0 12 8"><path d="M1.4 6.6 L6 2 L10.6 6.6" fill="none" stroke="#444746" stroke-width="1.7"/></svg>
<div style="left:0px;top:234px;width:1904px;height:28.5px;background:#fff;"></div>
<div style="left:0px;top:262px;width:1920px;height:1px;background:#c9cccd;"></div>
<span class="t" style="left:14.5px;top:240px;font-size:13px;color:#1f1f1f;letter-spacing:0.188px;">D7</span>
<svg style="left:86.25px;top:245.625px;" width="7.5" height="4.25" viewBox="0 0 7.5 4.25"><path d="M0 0 H7.5 L3.75 3.75Z" fill="#444746"/></svg>
<div style="left:106px;top:239px;width:1px;height:17px;background:#c7c7c7;"></div>
<span class="t" style="left:118.4px;top:238.5px;font-size:17px;color:#878c91;font-family:'Liberation Serif',serif;font-style:italic;">f</span>
<span class="t" style="left:124.4px;top:243.5px;font-size:12.5px;color:#878c91;font-family:'Liberation Serif',serif;font-style:italic;">x</span>
<span class="t" style="left:142px;top:240px;font-size:13px;color:#1f1f1f;letter-spacing:-0.485px;">Revenues - Operations</span>
<div style="left:1742.5px;top:234px;width:161.5px;height:24px;background:#eef3f7;border-radius:12px;"></div>
<svg style="left:1753.4px;top:239.4px;" width="13" height="13" viewBox="-0.5 -0.5 17 17"><path d="M8 0 C8.7 4.3 11.7 7.3 16 8 C11.7 8.7 8.7 11.7 8 16 C7.3 11.7 4.3 8.7 0 8 C4.3 7.3 7.3 4.3 8 0Z" fill="#1f1f1f" stroke="#1f1f1f" stroke-width="0.6" stroke-linejoin="round"/></svg>
<span class="t" style="left:1771.5px;top:238px;font-size:13px;color:#1f1f1f;">Summarize this data</span>
<div style="left:0px;top:263px;width:1908px;height:719px;background:#fff;"></div>
<div style="left:46px;top:263px;width:1862px;height:23px;background:#e4f7ec;"></div>
<div style="left:635px;top:263px;width:239px;height:23px;background:#b9e8cf;"></div>
<div style="left:0px;top:287px;width:45px;height:695px;background:#e4f7ec;"></div>
<div style="left:0px;top:413px;width:45px;height:20px;background:#b9e8cf;"></div>
<div style="left:0px;top:263px;width:41px;height:19px;background:#f8f9fa;"></div>
<div style="left:41px;top:263px;width:5px;height:24px;background:#c0c0c0;"></div>
<div style="left:0px;top:282px;width:46px;height:5px;background:#c0c0c0;"></div>
<div style="left:0px;top:262px;width:1920px;height:1px;background:#c9cccd;"></div>
<div style="left:46px;top:286px;width:1320px;height:1px;background:#a3c4ea;"></div>
<div style="left:1366px;top:286px;width:542px;height:1px;background:#c6e3c5;"></div>
<div style="left:45px;top:287px;width:1px;height:695px;background:#bfcac4;"></div>
<div style="left:140px;top:263px;width:1px;height:23px;background:#bfcac4;"></div>
<span class="t n" style="left:89.33px;top:267.5px;">A</span>
<div style="left:510px;top:263px;width:1px;height:23px;background:#bfcac4;"></div>
<span class="t n" style="left:321.83px;top:267.5px;">B</span>
<div style="left:634px;top:263px;width:1px;height:23px;background:#bfcac4;"></div>
<span class="t n" style="left:568.52px;top:267.5px;">C</span>
<div style="left:874px;top:263px;width:1px;height:23px;background:#bfcac4;"></div>
<span class="t n" style="left:750.52px;top:267.5px;">D</span>
<div style="left:1165px;top:263px;width:1px;height:23px;background:#bfcac4;"></div>
<span class="t n" style="left:1016.33px;top:267.5px;">E</span>
<div style="left:1366px;top:263px;width:1px;height:23px;background:#bfcac4;"></div>
<span class="t n" style="left:1262.63px;top:267.5px;">F</span>
<div style="left:1626px;top:263px;width:1px;height:23px;background:#bfcac4;"></div>
<span class="t n" style="left:1492.22px;top:267.5px;">G</span>
<div style="left:1886px;top:263px;width:1px;height:23px;background:#bfcac4;"></div>
<span class="t n" style="left:1752.52px;top:267.5px;">H</span>
<div style="left:46px;top:287px;width:1320px;height:21px;background:#6d9eeb;"></div>
<div style="left:1367px;top:287px;width:541px;height:21px;background:#b2d8a7;"></div>
<div style="left:46px;top:307px;width:1320px;height:1px;background:#6592dc;"></div>
<div style="left:1367px;top:307px;width:541px;height:1px;background:#a6cb9c;"></div>
<div style="left:0px;top:307px;width:45px;height:1px;background:#bfcac4;"></div>
<div style="left:46px;top:328px;width:1862px;height:1px;background:#e2e2e2;"></div>
<div style="left:0px;top:328px;width:45px;height:1px;background:#bfcac4;"></div>
<div style="left:46px;top:349px;width:1862px;height:1px;background:#e2e2e2;"></div>
<div style="left:0px;top:349px;width:45px;height:1px;background:#bfcac4;"></div>
<div style="left:46px;top:370px;width:1862px;height:1px;background:#e2e2e2;"></div>
<div style="left:0px;top:370px;width:45px;height:1px;background:#bfcac4;"></div>
<div style="left:46px;top:391px;width:1862px;height:1px;background:#e2e2e2;"></div>
<div style="left:0px;top:391px;width:45px;height:1px;background:#bfcac4;"></div>
<div style="left:46px;top:412px;width:1862px;height:1px;background:#e2e2e2;"></div>
<div style="left:0px;top:412px;width:45px;height:1px;background:#bfcac4;"></div>
<div style="left:46px;top:433px;width:1862px;height:1px;background:#e2e2e2;"></div>
<div style="left:0px;top:433px;width:45px;height:1px;background:#bfcac4;"></div>
<div style="left:46px;top:454px;width:1862px;height:1px;background:#e2e2e2;"></div>
<div style="left:0px;top:454px;width:45px;height:1px;background:#bfcac4;"></div>
<div style="left:46px;top:475px;width:1862px;height:1px;background:#e2e2e2;"></div>
<div style="left:0px;top:475px;width:45px;height:1px;background:#bfcac4;"></div>
<div style="left:46px;top:496px;width:1862px;height:1px;background:#e2e2e2;"></div>
<div style="left:0px;top:496px;width:45px;height:1px;background:#bfcac4;"></div>
<div style="left:46px;top:517px;width:1862px;height:1px;background:#e2e2e2;"></div>
<div style="left:0px;top:517px;width:45px;height:1px;background:#bfcac4;"></div>
<div style="left:46px;top:538px;width:1862px;height:1px;background:#e2e2e2;"></div>
<div style="left:0px;top:538px;width:45px;height:1px;background:#bfcac4;"></div>
<div style="left:46px;top:559px;width:1862px;height:1px;background:#e2e2e2;"></div>
<div style="left:0px;top:559px;width:45px;height:1px;background:#bfcac4;"></div>
<div style="left:46px;top:580px;width:1862px;height:1px;background:#e2e2e2;"></div>
<div style="left:0px;top:580px;width:45px;height:1px;background:#bfcac4;"></div>
<div style="left:46px;top:601px;width:1862px;height:1px;background:#e2e2e2;"></div>
<div style="left:0px;top:601px;width:45px;height:1px;background:#bfcac4;"></div>
<div style="left:46px;top:622px;width:1862px;height:1px;background:#e2e2e2;"></div>
<div style="left:0px;top:622px;width:45px;height:1px;background:#bfcac4;"></div>
<div style="left:46px;top:643px;width:1862px;height:1px;background:#e2e2e2;"></div>
<div style="left:0px;top:643px;width:45px;height:1px;background:#bfcac4;"></div>
<div style="left:46px;top:664px;width:1862px;height:1px;background:#e2e2e2;"></div>
<div style="left:0px;top:664px;width:45px;height:1px;background:#bfcac4;"></div>
<div style="left:46px;top:685px;width:1862px;height:1px;background:#e2e2e2;"></div>
<div style="left:0px;top:685px;width:45px;height:1px;background:#bfcac4;"></div>
<div style="left:46px;top:706px;width:1862px;height:1px;background:#e2e2e2;"></div>
<div style="left:0px;top:706px;width:45px;height:1px;background:#bfcac4;"></div>
<div style="left:46px;top:727px;width:1862px;height:1px;background:#e2e2e2;"></div>
<div style="left:0px;top:727px;width:45px;height:1px;background:#bfcac4;"></div>
<div style="left:46px;top:748px;width:1862px;height:1px;background:#e2e2e2;"></div>
<div style="left:0px;top:748px;width:45px;height:1px;background:#bfcac4;"></div>
<div style="left:46px;top:769px;width:1862px;height:1px;background:#e2e2e2;"></div>
<div style="left:0px;top:769px;width:45px;height:1px;background:#bfcac4;"></div>
<div style="left:46px;top:790px;width:1862px;height:1px;background:#e2e2e2;"></div>
<div style="left:0px;top:790px;width:45px;height:1px;background:#bfcac4;"></div>
<div style="left:46px;top:811px;width:1862px;height:1px;background:#e2e2e2;"></div>
<div style="left:0px;top:811px;width:45px;height:1px;background:#bfcac4;"></div>
<div style="left:46px;top:832px;width:1862px;height:1px;background:#e2e2e2;"></div>
<div style="left:0px;top:832px;width:45px;height:1px;background:#bfcac4;"></div>
<div style="left:46px;top:853px;width:1862px;height:1px;background:#e2e2e2;"></div>
<div style="left:0px;top:853px;width:45px;height:1px;background:#bfcac4;"></div>
<div style="left:46px;top:874px;width:1862px;height:1px;background:#e2e2e2;"></div>
<div style="left:0px;top:874px;width:45px;height:1px;background:#bfcac4;"></div>
<div style="left:46px;top:895px;width:1862px;height:1px;background:#e2e2e2;"></div>
<div style="left:0px;top:895px;width:45px;height:1px;background:#bfcac4;"></div>
<div style="left:46px;top:916px;width:1862px;height:1px;background:#e2e2e2;"></div>
<div style="left:0px;top:916px;width:45px;height:1px;background:#bfcac4;"></div>
<div style="left:46px;top:937px;width:1862px;height:1px;background:#e2e2e2;"></div>
<div style="left:0px;top:937px;width:45px;height:1px;background:#bfcac4;"></div>
<div style="left:46px;top:958px;width:1862px;height:1px;background:#e2e2e2;"></div>
<div style="left:0px;top:958px;width:45px;height:1px;background:#bfcac4;"></div>
<div style="left:46px;top:979px;width:1862px;height:1px;background:#e2e2e2;"></div>
<div style="left:0px;top:979px;width:45px;height:1px;background:#bfcac4;"></div>
<div style="left:140px;top:308px;width:1px;height:674px;background:#e2e2e2;"></div>
<div style="left:140px;top:287px;width:1px;height:20px;background:#6592dc;"></div>
<div style="left:510px;top:308px;width:1px;height:674px;background:#e2e2e2;"></div>
<div style="left:510px;top:287px;width:1px;height:20px;background:#6592dc;"></div>
<div style="left:634px;top:308px;width:1px;height:674px;background:#e2e2e2;"></div>
<div style="left:634px;top:287px;width:1px;height:20px;background:#6592dc;"></div>
<div style="left:874px;top:308px;width:1px;height:674px;background:#e2e2e2;"></div>
<div style="left:874px;top:287px;width:1px;height:20px;background:#6592dc;"></div>
<div style="left:1165px;top:308px;width:1px;height:674px;background:#e2e2e2;"></div>
<div style="left:1165px;top:287px;width:1px;height:20px;background:#6592dc;"></div>
<div style="left:1366px;top:308px;width:1px;height:674px;background:#e2e2e2;"></div>
<div style="left:1366px;top:287px;width:1px;height:20px;background:#8fb4c8;"></div>
<div style="left:1626px;top:308px;width:1px;height:674px;background:#e2e2e2;"></div>
<div style="left:1626px;top:287px;width:1px;height:20px;background:#a6cb9c;"></div>
<div style="left:1886px;top:308px;width:1px;height:674px;background:#e2e2e2;"></div>
<div style="left:1886px;top:287px;width:1px;height:20px;background:#a6cb9c;"></div>
<div style="left:1908px;top:263px;width:1px;height:719px;background:#e2e2e2;"></div>
<span class="t n" style="left:19.44px;top:289.5px;">1</span>
<span class="t n" style="left:19.44px;top:310.5px;">2</span>
<span class="t n" style="left:19.44px;top:331.5px;">3</span>
<span class="t n" style="left:19.44px;top:352.5px;">4</span>
<span class="t n" style="left:19.44px;top:373.5px;">5</span>
<span class="t n" style="left:19.44px;top:394.5px;">6</span>
<span class="t n" style="left:19.44px;top:415.5px;">7</span>
<span class="t n" style="left:19.44px;top:436.5px;">8</span>
<span class="t n" style="left:19.44px;top:457.5px;">9</span>
<span class="t n" style="left:16.38px;top:478.5px;">10</span>
<span class="t n" style="left:16.79px;top:499.5px;">11</span>
<span class="t n" style="left:16.38px;top:520.5px;">12</span>
<span class="t n" style="left:16.38px;top:541.5px;">13</span>
<span class="t n" style="left:16.38px;top:562.5px;">14</span>
<span class="t n" style="left:16.38px;top:583.5px;">15</span>
<span class="t n" style="left:16.38px;top:604.5px;">16</span>
<span class="t n" style="left:16.38px;top:625.5px;">17</span>
<span class="t n" style="left:16.38px;top:646.5px;">18</span>
<span class="t n" style="left:16.38px;top:667.5px;">19</span>
<span class="t n" style="left:16.38px;top:688.5px;">20</span>
<span class="t n" style="left:16.38px;top:709.5px;">21</span>
<span class="t n" style="left:16.38px;top:730.5px;">22</span>
<span class="t n" style="left:16.38px;top:751.5px;">23</span>
<span class="t n" style="left:16.38px;top:772.5px;">24</span>
<span class="t n" style="left:16.38px;top:793.5px;">25</span>
<span class="t n" style="left:16.38px;top:814.5px;">26</span>
<span class="t n" style="left:16.38px;top:835.5px;">27</span>
<span class="t n" style="left:16.38px;top:856.5px;">28</span>
<span class="t n" style="left:16.38px;top:877.5px;">29</span>
<span class="t n" style="left:16.38px;top:898.5px;">30</span>
<span class="t n" style="left:16.38px;top:919.5px;">31</span>
<span class="t n" style="left:16.38px;top:940.5px;">32</span>
<span class="t n" style="left:16.38px;top:961.5px;">33</span>
<span class="t h" style="left:49px;top:290px;">QB ID</span>
<div style="left:124px;top:294px;width:12px;height:1.2px;background:#1a6636;"></div>
<div style="left:126px;top:297px;width:8px;height:1.2px;background:#1a6636;"></div>
<div style="left:128.5px;top:300px;width:3px;height:1.2px;background:#1a6636;"></div>
<span class="t h" style="left:144px;top:290px;">Account Description</span>
<div style="left:494px;top:294px;width:12px;height:1.2px;background:#1a6636;"></div>
<div style="left:496px;top:297px;width:8px;height:1.2px;background:#1a6636;"></div>
<div style="left:498.5px;top:300px;width:3px;height:1.2px;background:#1a6636;"></div>
<span class="t h" style="left:514px;top:290px;">Category</span>
<div style="left:618px;top:294px;width:12px;height:1.2px;background:#1a6636;"></div>
<div style="left:620px;top:297px;width:8px;height:1.2px;background:#1a6636;"></div>
<div style="left:622.5px;top:300px;width:3px;height:1.2px;background:#1a6636;"></div>
<span class="t h" style="left:638px;top:290px;">Mapping - Level 1</span>
<div style="left:858px;top:294px;width:12px;height:1.2px;background:#1a6636;"></div>
<div style="left:860px;top:297px;width:8px;height:1.2px;background:#1a6636;"></div>
<div style="left:862.5px;top:300px;width:3px;height:1.2px;background:#1a6636;"></div>
<span class="t h" style="left:878px;top:290px;">Mapping - Level 2</span>
<div style="left:1149px;top:294px;width:12px;height:1.2px;background:#1a6636;"></div>
<div style="left:1151px;top:297px;width:8px;height:1.2px;background:#1a6636;"></div>
<div style="left:1153.5px;top:300px;width:3px;height:1.2px;background:#1a6636;"></div>
<span class="t h" style="left:1169px;top:290px;">Mapping - Level 3</span>
<div style="left:1350px;top:294px;width:12px;height:1.2px;background:#1a6636;"></div>
<div style="left:1352px;top:297px;width:8px;height:1.2px;background:#1a6636;"></div>
<div style="left:1354.5px;top:300px;width:3px;height:1.2px;background:#1a6636;"></div>
<span class="t h" style="left:1370px;top:290px;">Payment Flows through Website?</span>
<div style="left:1610px;top:294px;width:12px;height:1.2px;background:#1a6636;"></div>
<div style="left:1612px;top:297px;width:8px;height:1.2px;background:#1a6636;"></div>
<div style="left:1614.5px;top:300px;width:3px;height:1.2px;background:#1a6636;"></div>
<span class="t h" style="left:1630px;top:290px;">Form Links</span>
<div style="left:1870px;top:294px;width:12px;height:1.2px;background:#1a6636;"></div>
<div style="left:1872px;top:297px;width:8px;height:1.2px;background:#1a6636;"></div>
<div style="left:1874.5px;top:300px;width:3px;height:1.2px;background:#1a6636;"></div>
<span class="t h" style="left:1890px;top:290px;">Me</span>
<span class="t c" style="left:49px;top:311px;">4001</span>
<span class="t c" style="left:144px;top:311px;">Muharram - General</span>
<span class="t c" style="left:514px;top:311px;">Revenue</span>
<span class="t c" style="left:638px;top:311px;">Revenues - Operations</span>
<span class="t c" style="left:878px;top:311px;">Muharram &amp; Ramadhan</span>
<span class="t c" style="left:1169px;top:311px;">Muharram</span>
<span class="t c" style="left:1370px;top:311px;">Yes</span>
<span class="t c" style="left:49px;top:332px;">4002</span>
<span class="t c" style="left:144px;top:332px;">Muharram - Tabut</span>
<span class="t c" style="left:514px;top:332px;">Revenue</span>
<span class="t c" style="left:638px;top:332px;">Revenues - Operations</span>
<span class="t c" style="left:878px;top:332px;">Muharram &amp; Ramadhan</span>
<span class="t c" style="left:1169px;top:332px;">Muharram</span>
<span class="t c" style="left:1370px;top:332px;">Yes</span>
<span class="t c" style="left:49px;top:353px;">4101</span>
<span class="t c" style="left:144px;top:353px;">Ramadhan - General</span>
<span class="t c" style="left:514px;top:353px;">Revenue</span>
<span class="t c" style="left:638px;top:353px;">Revenues - Operations</span>
<span class="t c" style="left:878px;top:353px;">Muharram &amp; Ramadhan</span>
<span class="t c" style="left:1169px;top:353px;">Ramadhan</span>
<span class="t c" style="left:1370px;top:353px;">Yes</span>
<span class="t c" style="left:49px;top:374px;">4102</span>
<span class="t c" style="left:144px;top:374px;">Ramadhan - Tabut</span>
<span class="t c" style="left:514px;top:374px;">Revenue</span>
<span class="t c" style="left:638px;top:374px;">Revenues - Operations</span>
<span class="t c" style="left:878px;top:374px;">Muharram &amp; Ramadhan</span>
<span class="t c" style="left:1169px;top:374px;">Ramadhan</span>
<span class="t c" style="left:1370px;top:374px;">Yes</span>
<span class="t c" style="left:49px;top:395px;">4103</span>
<span class="t c" style="left:144px;top:395px;">Ramadhan - Tea &amp; Juice</span>
<span class="t c" style="left:514px;top:395px;">Revenue</span>
<span class="t c" style="left:638px;top:395px;">Revenues - Operations</span>
<span class="t c" style="left:878px;top:395px;">Muharram &amp; Ramadhan</span>
<span class="t c" style="left:1169px;top:395px;">Ramadhan</span>
<span class="t c" style="left:1370px;top:395px;">Yes</span>
<span class="t c" style="left:49px;top:416px;">4104</span>
<span class="t c" style="left:144px;top:416px;">Ramadhan - Eid</span>
<span class="t c" style="left:514px;top:416px;">Revenue</span>
<span class="t c" style="left:638px;top:416px;">Revenues - Operations</span>
<span class="t c" style="left:878px;top:416px;">Muharram &amp; Ramadhan</span>
<span class="t c" style="left:1169px;top:416px;">Ramadhan</span>
<span class="t c" style="left:1370px;top:416px;">Yes</span>
<span class="t c" style="left:49px;top:437px;">4105</span>
<span class="t c" style="left:144px;top:437px;">Ramadhan - Iftaar</span>
<span class="t c" style="left:514px;top:437px;">Revenue</span>
<span class="t c" style="left:638px;top:437px;">Revenues - Operations</span>
<span class="t c" style="left:878px;top:437px;">Muharram &amp; Ramadhan</span>
<span class="t c" style="left:1169px;top:437px;">Ramadhan</span>
<span class="t c" style="left:1370px;top:437px;">Yes</span>
<span class="t c" style="left:49px;top:458px;">4201</span>
<span class="t c" style="left:144px;top:458px;">Membership Fees - Adult</span>
<span class="t c" style="left:514px;top:458px;">Revenue</span>
<span class="t c" style="left:638px;top:458px;">Revenues - Operations</span>
<span class="t c" style="left:878px;top:458px;">Membership Fees</span>
<span class="t c" style="left:1169px;top:458px;">Adult</span>
<span class="t c" style="left:1370px;top:458px;">Yes</span>
<span class="t c" style="left:49px;top:479px;">4202</span>
<span class="t c" style="left:144px;top:479px;">Membership Fees - Youth</span>
<span class="t c" style="left:514px;top:479px;">Revenue</span>
<span class="t c" style="left:638px;top:479px;">Revenues - Operations</span>
<span class="t c" style="left:878px;top:479px;">Membership Fees</span>
<span class="t c" style="left:1169px;top:479px;">Youth</span>
<span class="t c" style="left:1370px;top:479px;">Yes</span>
<span class="t c" style="left:49px;top:500px;">4203</span>
<span class="t c" style="left:144px;top:500px;">Membership Fees - Senior</span>
<span class="t c" style="left:514px;top:500px;">Revenue</span>
<span class="t c" style="left:638px;top:500px;">Revenues - Operations</span>
<span class="t c" style="left:878px;top:500px;">Membership Fees</span>
<span class="t c" style="left:1169px;top:500px;">Senior</span>
<span class="t c" style="left:1370px;top:500px;">Yes</span>
<span class="t c" style="left:49px;top:521px;">4204</span>
<span class="t c" style="left:144px;top:521px;">Membership Fees - Adult Arrears</span>
<span class="t c" style="left:514px;top:521px;">Revenue</span>
<span class="t c" style="left:638px;top:521px;">Revenues - Operations</span>
<span class="t c" style="left:878px;top:521px;">Membership Fees</span>
<span class="t c" style="left:1169px;top:521px;">Adult</span>
<span class="t c" style="left:1370px;top:521px;">Yes</span>
<span class="t c" style="left:49px;top:542px;">4205</span>
<span class="t c" style="left:144px;top:542px;">Membership Fees - Youth Arrears</span>
<span class="t c" style="left:514px;top:542px;">Revenue</span>
<span class="t c" style="left:638px;top:542px;">Revenues - Operations</span>
<span class="t c" style="left:878px;top:542px;">Membership Fees</span>
<span class="t c" style="left:1169px;top:542px;">Youth</span>
<span class="t c" style="left:1370px;top:542px;">Yes</span>
<span class="t c" style="left:49px;top:563px;">4206</span>
<span class="t c" style="left:144px;top:563px;">Membership Fees - Senior Arrears</span>
<span class="t c" style="left:514px;top:563px;">Revenue</span>
<span class="t c" style="left:638px;top:563px;">Revenues - Operations</span>
<span class="t c" style="left:878px;top:563px;">Membership Fees</span>
<span class="t c" style="left:1169px;top:563px;">Senior</span>
<span class="t c" style="left:1370px;top:563px;">Yes</span>
<span class="t c" style="left:49px;top:584px;">4301</span>
<span class="t c" style="left:144px;top:584px;">General Donations</span>
<span class="t c" style="left:514px;top:584px;">Revenue</span>
<span class="t c" style="left:638px;top:584px;">Revenues - Operations</span>
<span class="t c" style="left:878px;top:584px;">General</span>
<span class="t c" style="left:1169px;top:584px;">General</span>
<span class="t c" style="left:1370px;top:584px;">Yes</span>
<span class="t c" style="left:49px;top:605px;">4302</span>
<span class="t c" style="left:144px;top:605px;">Mosque Maintenance</span>
<span class="t c" style="left:514px;top:605px;">Revenue</span>
<span class="t c" style="left:638px;top:605px;">Revenues - Operations</span>
<span class="t c" style="left:878px;top:605px;">General</span>
<span class="t c" style="left:1169px;top:605px;">Mosque Maintenance</span>
<span class="t c" style="left:1370px;top:605px;">Yes</span>
<span class="t c" style="left:49px;top:626px;">4303</span>
<span class="t c" style="left:144px;top:626px;">Nazr</span>
<span class="t c" style="left:514px;top:626px;">Revenue</span>
<span class="t c" style="left:638px;top:626px;">Revenues - Operations</span>
<span class="t c" style="left:878px;top:626px;">General</span>
<span class="t c" style="left:1169px;top:626px;">Nazr</span>
<span class="t c" style="left:1370px;top:626px;">Yes</span>
<span class="t c" style="left:49px;top:647px;">4401</span>
<span class="t c" style="left:144px;top:647px;">Niaz General</span>
<span class="t c" style="left:514px;top:647px;">Revenue</span>
<span class="t c" style="left:638px;top:647px;">Revenues - Operations</span>
<span class="t c" style="left:878px;top:647px;">Niaz - General</span>
<span class="t c" style="left:1169px;top:647px;">n/a</span>
<span class="t c" style="left:1370px;top:647px;">Yes</span>
<span class="t c" style="left:49px;top:668px;">4402</span>
<span class="t c" style="left:144px;top:668px;">Niaz Jumah</span>
<span class="t c" style="left:514px;top:668px;">Revenue</span>
<span class="t c" style="left:638px;top:668px;">Revenues - Operations</span>
<span class="t c" style="left:878px;top:668px;">Niaz - General</span>
<span class="t c" style="left:1169px;top:668px;">n/a</span>
<span class="t c" style="left:1370px;top:668px;">Yes</span>
<span class="t c" style="left:49px;top:689px;">4501</span>
<span class="t c" style="left:144px;top:689px;">Niaz Specific</span>
<span class="t c" style="left:514px;top:689px;">Revenue</span>
<span class="t c" style="left:638px;top:689px;">Revenues - Operations</span>
<span class="t c" style="left:878px;top:689px;">Niaz - Specific</span>
<span class="t c" style="left:1169px;top:689px;">n/a</span>
<span class="t c" style="left:1370px;top:689px;">Yes</span>
<span class="t c" style="left:49px;top:710px;">4502</span>
<span class="t c" style="left:144px;top:710px;">Niaz Pledged</span>
<span class="t c" style="left:514px;top:710px;">Revenue</span>
<span class="t c" style="left:638px;top:710px;">Revenues - Operations</span>
<span class="t c" style="left:878px;top:710px;">Niaz - Specific</span>
<span class="t c" style="left:1169px;top:710px;">n/a</span>
<span class="t c" style="left:1370px;top:710px;">Yes</span>
<span class="t c" style="left:49px;top:731px;">4601</span>
<span class="t c" style="left:144px;top:731px;">Tabligh Programs General</span>
<span class="t c" style="left:514px;top:731px;">Revenue</span>
<span class="t c" style="left:638px;top:731px;">Revenues - Operations</span>
<span class="t c" style="left:878px;top:731px;">Board &amp; Committee Programs</span>
<span class="t c" style="left:1169px;top:731px;">Jaffari Tabligh Committee</span>
<span class="t c" style="left:1370px;top:731px;">Yes</span>
<span class="t c" style="left:49px;top:752px;">4602</span>
<span class="t c" style="left:144px;top:752px;">JSC Donations</span>
<span class="t c" style="left:514px;top:752px;">Revenue</span>
<span class="t c" style="left:638px;top:752px;">Revenues - Operations</span>
<span class="t c" style="left:878px;top:752px;">Board &amp; Committee Programs</span>
<span class="t c" style="left:1169px;top:752px;">JSC</span>
<span class="t c" style="left:1370px;top:752px;">Yes</span>
<span class="t c" style="left:49px;top:773px;">4603</span>
<span class="t c" style="left:144px;top:773px;">JSS Donations</span>
<span class="t c" style="left:514px;top:773px;">Revenue</span>
<span class="t c" style="left:638px;top:773px;">Revenues - Operations</span>
<span class="t c" style="left:878px;top:773px;">Board &amp; Committee Programs</span>
<span class="t c" style="left:1169px;top:773px;">Jaffari Support Services</span>
<span class="t c" style="left:1370px;top:773px;">Yes</span>
<span class="t c" style="left:49px;top:794px;">4604</span>
<span class="t c" style="left:144px;top:794px;">JIY Donations</span>
<span class="t c" style="left:514px;top:794px;">Revenue</span>
<span class="t c" style="left:638px;top:794px;">Revenues - Operations</span>
<span class="t c" style="left:878px;top:794px;">Board &amp; Committee Programs</span>
<span class="t c" style="left:1169px;top:794px;">Jaffari Islamic Youth</span>
<span class="t c" style="left:1370px;top:794px;">Yes</span>
<span class="t c" style="left:49px;top:815px;">4605</span>
<span class="t c" style="left:144px;top:815px;">JEB Donations</span>
<span class="t c" style="left:514px;top:815px;">Revenue</span>
<span class="t c" style="left:638px;top:815px;">Revenues - Operations</span>
<span class="t c" style="left:878px;top:815px;">Board &amp; Committee Programs</span>
<span class="t c" style="left:1169px;top:815px;">Jaffari Education Board</span>
<span class="t c" style="left:1370px;top:815px;">Yes</span>
<span class="t c" style="left:49px;top:836px;">4606</span>
<span class="t c" style="left:144px;top:836px;">JVC Donations</span>
<span class="t c" style="left:514px;top:836px;">Revenue</span>
<span class="t c" style="left:638px;top:836px;">Revenues - Operations</span>
<span class="t c" style="left:878px;top:836px;">Board &amp; Committee Programs</span>
<span class="t c" style="left:1169px;top:836px;">Jaffari Volunteers Committee</span>
<span class="t c" style="left:1370px;top:836px;">No</span>
<span class="t c" style="left:49px;top:857px;">5101</span>
<span class="t c" style="left:144px;top:857px;">Investment Income</span>
<span class="t c" style="left:514px;top:857px;">Revenue</span>
<span class="t c" style="left:638px;top:857px;">Revenues - Rental &amp; Others</span>
<span class="t c" style="left:878px;top:857px;">Investment Income</span>
<span class="t c" style="left:1169px;top:857px;">Investment Income</span>
<span class="t c" style="left:1370px;top:857px;">No</span>
<span class="t c" style="left:49px;top:878px;">5201</span>
<span class="t c" style="left:144px;top:878px;">Rental School</span>
<span class="t c" style="left:514px;top:878px;">Revenue</span>
<span class="t c" style="left:638px;top:878px;">Revenues - Rental &amp; Others</span>
<span class="t c" style="left:878px;top:878px;">Rental</span>
<span class="t c" style="left:1169px;top:878px;">Rental</span>
<span class="t c" style="left:1370px;top:878px;">No</span>
<span class="t c" style="left:49px;top:899px;">5202</span>
<span class="t c" style="left:144px;top:899px;">Rental Cafeteria</span>
<span class="t c" style="left:514px;top:899px;">Revenue</span>
<span class="t c" style="left:638px;top:899px;">Revenues - Rental &amp; Others</span>
<span class="t c" style="left:878px;top:899px;">Rental</span>
<span class="t c" style="left:1169px;top:899px;">Rental</span>
<span class="t c" style="left:1370px;top:899px;">No</span>
<span class="t c" style="left:49px;top:920px;">5203</span>
<span class="t c" style="left:144px;top:920px;">Rental Sunday School</span>
<span class="t c" style="left:514px;top:920px;">Revenue</span>
<span class="t c" style="left:638px;top:920px;">Revenues - Rental &amp; Others</span>
<span class="t c" style="left:878px;top:920px;">Rental</span>
<span class="t c" style="left:1169px;top:920px;">Rental</span>
<span class="t c" style="left:1370px;top:920px;">No</span>
<span class="t c" style="left:49px;top:941px;">5204</span>
<span class="t c" style="left:144px;top:941px;">Rental Main Hall</span>
<span class="t c" style="left:514px;top:941px;">Revenue</span>
<span class="t c" style="left:638px;top:941px;">Revenues - Rental &amp; Others</span>
<span class="t c" style="left:878px;top:941px;">Rental</span>
<span class="t c" style="left:1169px;top:941px;">Rental</span>
<span class="t c" style="left:1370px;top:941px;">No</span>
<span class="t c" style="left:49px;top:962px;">5205</span>
<span class="t c" style="left:144px;top:962px;">Rental Bauquet Hall</span>
<span class="t c" style="left:514px;top:962px;">Revenue</span>
<span class="t c" style="left:638px;top:962px;">Revenues - Rental &amp; Others</span>
<span class="t c" style="left:878px;top:962px;">Rental</span>
<span class="t c" style="left:1169px;top:962px;">Rental</span>
<span class="t c" style="left:1370px;top:962px;">No</span>
<div style="left:634px;top:412px;width:241px;height:22px;border:2px solid #1a5fd0;box-sizing:border-box;"></div>
<div style="left:870.5px;top:429.5px;width:8.5px;height:8.5px;background:#1a5fd0;border-radius:5px;"></div>
<div style="left:1909px;top:263px;width:11px;height:719px;background:#f8f9fa;"></div>
<div style="left:1909px;top:286px;width:11px;height:1px;background:#e0e0e0;"></div>
<div style="left:1910.5px;top:288px;width:8px;height:25.5px;background:#dadce0;border-radius:4px;"></div>
<div style="left:1909px;top:950px;width:11px;height:1px;background:#e0e0e0;"></div>
<div style="left:1909px;top:966px;width:11px;height:1px;background:#e0e0e0;"></div>
<svg style="left:1909px;top:953.6px;" width="11" height="8" viewBox="0 0 11 8"><path d="M2 6 H9 L5.5 2Z" fill="#80868b"/></svg>
<svg style="left:1909px;top:970.4px;" width="11" height="8" viewBox="0 0 11 8"><path d="M2 2 H9 L5.5 6Z" fill="#80868b"/></svg>
<svg style="left:216px;top:589px;" width="18" height="23" viewBox="0 0 18 23"><path d="M3.4 2 L3.4 18.5 L7 14.8 L10 20.6 L12.4 19.4 L9.6 13.8 L15 13.5 Z" fill="#fff" stroke="#000" stroke-width="1" stroke-linejoin="miter"/></svg>
<div style="left:0px;top:982px;width:1920px;height:14px;background:#fff;"></div>
<div style="left:0px;top:982px;width:1909px;height:1px;background:#e2e2e2;"></div>
<div style="left:45px;top:982px;width:1px;height:13px;background:#d0d0d0;"></div>
<div style="left:0px;top:982px;width:45px;height:13px;background:#f8f9fa;"></div>
<div style="left:47.5px;top:984.2px;width:890px;height:9px;background:#dadde1;border-radius:5px;"></div>
<div style="left:1877px;top:983px;width:16px;height:12px;background:#f8f9fa;border-left:1px solid #e0e0e0;"></div>
<div style="left:1893px;top:983px;width:16px;height:12px;background:#f8f9fa;border-left:1px solid #e0e0e0;border-right:1px solid #e0e0e0;"></div>
<svg style="left:1881px;top:984px;" width="8" height="9" viewBox="0 0 8 9"><path d="M6 1.4 V7.6 L2 4.5Z" fill="#80868b"/></svg>
<svg style="left:1897px;top:984px;" width="8" height="9" viewBox="0 0 8 9"><path d="M2 1.4 V7.6 L6 4.5Z" fill="#80868b"/></svg>
<div style="left:0px;top:995px;width:1920px;height:1px;background:#e1e3e6;"></div>
<div style="left:0px;top:996px;width:1920px;height:36px;background:#f8fbfc;"></div>
<svg style="left:55px;top:1008px;" width="14" height="14" viewBox="55 1008 14 14"><path d="M62 1010.4 V1020 M57.2 1015.2 H66.8" stroke="#444746" stroke-width="1.5"/></svg>
<svg style="left:93px;top:1008px;" width="18" height="14" viewBox="93 1008 18 14"><path d="M95 1011 H109.3 M95 1015.2 H109.3 M95 1019.4 H109.3" stroke="#444746" stroke-width="1.5"/></svg>
<span class="t" style="left:146.5px;top:1006px;font-size:15px;color:#444746;letter-spacing:0.334px;-webkit-text-stroke:0.3px #444746;">Sports and Tabligh</span>
<svg style="left:288.0px;top:1013.5px;" width="8" height="4.5" viewBox="0 0 8 4.5"><path d="M0 0 H8 L4.0 4.0Z" fill="#444746"/></svg>
<div style="left:321px;top:1003.5px;width:19.5px;height:19.5px;background:#d7dfe9;border-radius:10px 10px 10px 2px;"></div>
<span class="t" style="left:327.64px;top:1008.5px;font-size:11px;color:#1f1f1f;">1</span>
<span class="t" style="left:347.5px;top:1006px;font-size:15px;color:#444746;letter-spacing:-0.258px;-webkit-text-stroke:0.3px #444746;">Sheet1</span>
<svg style="left:404.0px;top:1013.5px;" width="8" height="4.5" viewBox="0 0 8 4.5"><path d="M0 0 H8 L4.0 4.0Z" fill="#444746"/></svg>
<span class="t" style="left:437.5px;top:1006px;font-size:15px;color:#444746;letter-spacing:0.076px;-webkit-text-stroke:0.3px #444746;">Sheet4</span>
<svg style="left:497.5px;top:1013.5px;" width="8" height="4.5" viewBox="0 0 8 4.5"><path d="M0 0 H8 L4.0 4.0Z" fill="#444746"/></svg>
<div style="left:518px;top:996px;width:226px;height:36px;background:#e1e9f7;"></div>
<span class="t" style="left:530px;top:1006px;font-size:15px;color:#1a56c8;font-weight:700;letter-spacing:0.056px;">Gift Designation Mapping</span>
<svg style="left:724.0px;top:1013.5px;" width="8" height="4.5" viewBox="0 0 8 4.5"><path d="M0 0 H8 L4.0 4.0Z" fill="#1a56c8"/></svg>
<span class="t" style="left:756.5px;top:1006px;font-size:15px;color:#444746;letter-spacing:0.067px;-webkit-text-stroke:0.3px #444746;">Pivot Table 1</span>
<svg style="left:854.0px;top:1013.5px;" width="8" height="4.5" viewBox="0 0 8 4.5"><path d="M0 0 H8 L4.0 4.0Z" fill="#444746"/></svg>
<svg style="left:1886px;top:1009px;" width="12" height="14" viewBox="0 0 12 14"><path d="M8.8 2 L3.6 7 L8.8 12" fill="none" stroke="#444746" stroke-width="1.7"/></svg>
<div style="left:1721px;top:954px;width:191px;height:32px;background:#fff;border-radius:16px;box-shadow:0 1px 3px rgba(60,64,67,.30),0 2px 8px rgba(60,64,67,.16);"></div>
<svg style="left:1730px;top:962px;" width="16" height="16" viewBox="0 0 16 16"><path d="M8 0 C8.7 4.3 11.7 7.3 16 8 C11.7 8.7 8.7 11.7 8 16 C7.3 11.7 4.3 8.7 0 8 C4.3 7.3 7.3 4.3 8 0Z" fill="#444746" stroke="#444746" stroke-width="0.9" stroke-linejoin="round"/></svg>
<span class="t" style="left:1755.2px;top:962.2px;font-size:13px;color:#3c4043;letter-spacing:-0.160px;-webkit-text-stroke:0.3px #3c4043;">Analyze this data</span>
<svg style="left:1865.75px;top:968.375px;" width="8.5" height="4.75" viewBox="0 0 8.5 4.75"><path d="M0 0 H8.5 L4.25 4.25Z" fill="#444746"/></svg>
<svg style="left:1890px;top:964px;" width="12" height="12" viewBox="0 0 12 12"><path d="M1.4 1.4 L10.6 10.6 M10.6 1.4 L1.4 10.6" stroke="#303030" stroke-width="1.4"/></svg>
<div style="left:0px;top:1032px;width:1920px;height:48px;background:#1c1c1c;"></div>
<div style="left:21px;top:1045px;width:20px;height:20px;background:radial-gradient(circle at 35% 30%,#ffc928 0,#ffa614 45%,#f57a00 100%);border-radius:10px;"></div>
<span class="t" style="left:51px;top:1040.5px;font-size:12px;color:#fff;letter-spacing:-0.371px;text-shadow:0 0 0.5px #fff;">78°F</span>
<span class="t" style="left:51px;top:1056.5px;font-size:12px;color:#d0d0d0;letter-spacing:-0.206px;">Sunny</span>
<div style="left:507px;top:1045px;width:11px;height:11px;background:linear-gradient(135deg,#62cdfc,#1b9de8);border-radius:1.2px;"></div>
<div style="left:519px;top:1045px;width:11px;height:11px;background:linear-gradient(135deg,#62cdfc,#1b9de8);border-radius:1.2px;"></div>
<div style="left:507px;top:1057px;width:11px;height:11px;background:linear-gradient(135deg,#62cdfc,#1b9de8);border-radius:1.2px;"></div>
<div style="left:519px;top:1057px;width:11px;height:11px;background:linear-gradient(135deg,#62cdfc,#1b9de8);border-radius:1.2px;"></div>
<div style="left:543px;top:1040px;width:220px;height:32px;background:#2e2e2e;border-radius:16px;border:1px solid #474747;box-sizing:border-box;"></div>
<svg style="left:553px;top:1047px;" width="18" height="18" viewBox="0 0 18 18"><circle cx="7.6" cy="7.6" r="5" fill="none" stroke="#f0f0f0" stroke-width="1.5"/><path d="M11.3 11.3 L15.4 15.4" stroke="#f0f0f0" stroke-width="1.6" stroke-linecap="round"/></svg>
<span class="t" style="left:580px;top:1048px;font-size:14px;color:#e4e4e4;letter-spacing:-0.560px;">Search</span>
<svg style="left:711px;top:1040px;" width="48" height="31" viewBox="0 0 48 31"><defs><radialGradient id="mg" cx="0.4" cy="0.3" r="0.8"><stop offset="0" stop-color="#ffe08a"/><stop offset="0.6" stop-color="#f8c862"/><stop offset="1" stop-color="#e48d45"/></radialGradient></defs><circle cx="22.8" cy="13" r="11.4" fill="url(#mg)"/><circle cx="18.6" cy="8.6" r="1.9" fill="#f0b552"/><circle cx="27" cy="9.6" r="1.5" fill="#f0b552"/><circle cx="20" cy="16.6" r="1.6" fill="#e9a24c"/><circle cx="27.4" cy="17.4" r="1.4" fill="#e49a4a"/><path d="M3 25 L5.4 17.6 L7.2 22 L9 16 L11.6 23 L13.4 19 L16 25Z M30 25 L32.6 18.4 L34.4 22 L36.6 15.4 L38.6 21 L40.6 18 L44 25Z" fill="#4860c6"/><path d="M3 25.2 Q14 22.6 26 23.6 Q36 24.4 45 24.6 Q28 30.6 3 25.2Z" fill="#dfe7f8"/><path d="M24 24 Q34 24 45 24.6 Q36 27.6 26 27.6Z" fill="#5368c2" opacity="0.7"/></svg>
<div style="left:775px;top:1050.8px;width:18px;height:15.6px;background:linear-gradient(180deg,#7a7a7a,#5e5e5e);border-radius:1.5px;"></div>
<div style="left:781.2px;top:1044.5px;width:18px;height:16.5px;background:linear-gradient(135deg,#ffffff,#d2d2d2);border-radius:1.5px;"></div>
<div style="left:781.2px;top:1050.8px;width:11.8px;height:10.2px;background:#b4b4b4;opacity:.95;"></div>
<svg style="left:817px;top:1043px;" width="26" height="26" viewBox="0 0 26 26"><defs><linearGradient id="cg" x1="0" y1="0" x2="1" y2="1"><stop offset="0" stop-color="#8a7ff0"/><stop offset="1" stop-color="#5b4fc9"/></linearGradient></defs><path d="M13 1.6 A11.2 11.2 0 1 1 6.4 21.8 L1.6 24.6 L3.2 18.6 A11.2 11.2 0 0 1 13 1.6Z" fill="url(#cg)"/><rect x="6.6" y="8.6" width="9" height="8" rx="1.8" fill="#fff"/><path d="M15.8 11.6 L19.6 9 V16.2 L15.8 13.6Z" fill="#fff"/></svg>
<svg style="left:862px;top:1044px;" width="26" height="24" viewBox="0 0 26 24"><path d="M1 3 A1.6 1.6 0 0 1 2.6 1.4 H9 L11.4 4 H23.4 A1.6 1.6 0 0 1 25 5.6 V8 H1Z" fill="#e9a825"/><rect x="1" y="5.6" width="24" height="17" rx="1.6" fill="#fbd052"/><path d="M1 17 H25 V21 A1.6 1.6 0 0 1 23.4 22.6 H2.6 A1.6 1.6 0 0 1 1 21Z" fill="#f3b62c"/><rect x="7.4" y="15.4" width="11.2" height="7.2" rx="1.2" fill="#2f8be2"/><rect x="9.6" y="17.4" width="6.8" height="1.8" rx="0.9" fill="#0f5dae"/></svg>
<div style="left:871.5px;top:1072px;width:6px;height:2.5px;background:#8a8a8a;border-radius:2px;"></div>
<svg style="left:906.8px;top:1043.9px;" width="24" height="24" viewBox="0 0 24 24"><defs><linearGradient id="eg1" x1="0" y1="0.5" x2="1" y2="0.25"><stop offset="0" stop-color="#1b86e2"/><stop offset="0.5" stop-color="#2fb3e6"/><stop offset="1" stop-color="#63e27a"/></linearGradient><linearGradient id="eg2" x1="0" y1="0" x2="0.8" y2="1"><stop offset="0" stop-color="#1a7fd6"/><stop offset="1" stop-color="#0b4f9c"/></linearGradient></defs><circle cx="12" cy="12" r="12" fill="url(#eg1)"/><path d="M0.2 13.6 C0.8 8.4 5.6 5.8 10.4 6.8 C7 8.6 6.6 12.6 8.8 15.6 C11.6 19.2 17 19.6 21.4 17 C19.6 21.4 15.8 24 12 24 C5.4 24 -0.4 19.4 0.2 13.6Z" fill="url(#eg2)"/><path d="M10.4 6.8 C15.4 5.6 20.2 8.4 20.6 12.4 C20.8 14.8 18.6 16 16.4 15.4 C17.4 13 15.6 10.2 12.6 10.2 C9.8 10.2 8 12.6 8.8 15.6 C6.6 12.6 7 8.6 10.4 6.8Z" fill="#38a8ee"/><path d="M16.4 15.4 C18.6 16 20.8 14.8 20.6 12.4 L24 12.6 C24 14.4 23.2 16 21.4 17 C19.6 17.6 17.4 17 16.4 15.4Z" fill="#1c1c1c"/></svg>
<svg style="left:950px;top:1043px;" width="26" height="26" viewBox="0 0 26 26"><defs><radialGradient id="fg" cx="0.6" cy="0.3" r="0.9"><stop offset="0" stop-color="#fff36b"/><stop offset="0.4" stop-color="#ff980e"/><stop offset="0.85" stop-color="#ff3647"/><stop offset="1" stop-color="#e31587"/></radialGradient></defs><path d="M13 2.2 C15 0.6 17.6 1 18.2 1.2 C18 3 19.2 4.6 21.4 6.4 C24.2 8.8 25 12 24.6 15 C23.8 20.8 19 24.8 13 24.8 C6.6 24.8 1.4 19.8 1.4 13.4 C1.4 9.8 3 6.8 5 5 C5 6.4 5.6 7.4 6.2 7.8 C7.6 4.8 10.2 2.6 13 2.2Z" fill="url(#fg)"/><circle cx="12.6" cy="14" r="5.6" fill="#7542e5"/><path d="M7 12.6 C9.4 9.8 14.6 9.6 17.4 11.4 C15 11.4 13.8 12.6 13.6 14 C13.2 16.4 9.6 16.6 7 12.6Z" fill="#ff9a1f"/></svg>
<svg style="left:994px;top:1044px;" width="24" height="24" viewBox="0 0 24 24"><circle cx="12" cy="12" r="11.5" fill="#fbc116"/><path d="M12 12 L2.04 6.25 A11.5 11.5 0 0 1 21.96 6.25Z" fill="#e33b2e"/><path d="M12 12 L2.04 6.25 A11.5 11.5 0 0 0 12 23.5 L17.2 14.6Z" fill="#2ba24c"/><path d="M12 0.5 A11.5 11.5 0 0 1 21.96 6.25 H12Z" fill="#e33b2e"/><circle cx="12" cy="12" r="5.4" fill="#fff"/><circle cx="12" cy="12" r="4.3" fill="#4285f4"/></svg>
<div style="left:1011px;top:1039px;width:13px;height:13px;background:radial-gradient(circle at 50% 45%,#c69675 0,#b07d5c 35%,#2d2523 38%,#efefef 62%);border-radius:7px;"></div>
<div style="left:1004px;top:1072px;width:6px;height:2.5px;background:#8a8a8a;border-radius:2px;"></div>
<svg style="left:1039px;top:1044px;" width="24" height="24" viewBox="0 0 24 24"><circle cx="12" cy="12" r="11.5" fill="#fbc116"/><path d="M12 12 L2.04 6.25 A11.5 11.5 0 0 1 21.96 6.25Z" fill="#e33b2e"/><path d="M12 12 L2.04 6.25 A11.5 11.5 0 0 0 12 23.5 L17.2 14.6Z" fill="#2ba24c"/><path d="M12 0.5 A11.5 11.5 0 0 1 21.96 6.25 H12Z" fill="#e33b2e"/><circle cx="12" cy="12" r="5.4" fill="#fff"/><circle cx="12" cy="12" r="4.3" fill="#4285f4"/></svg>
<div style="left:1052px;top:1044px;width:11px;height:11px;background:#2a2a2a;border-radius:3px;transform:rotate(-25deg);border:1px solid #555;box-sizing:border-box;"></div>
<div style="left:1075px;top:1036px;width:39px;height:40px;background:#2f2f2f;border-radius:5px;border:1px solid #3a3a3a;box-sizing:border-box;"></div>
<svg style="left:1082.5px;top:1044px;" width="24" height="24" viewBox="0 0 24 24"><circle cx="12" cy="12" r="11.5" fill="#fbc116"/><path d="M12 12 L2.04 6.25 A11.5 11.5 0 0 1 21.96 6.25Z" fill="#e33b2e"/><path d="M12 12 L2.04 6.25 A11.5 11.5 0 0 0 12 23.5 L17.2 14.6Z" fill="#2ba24c"/><path d="M12 0.5 A11.5 11.5 0 0 1 21.96 6.25 H12Z" fill="#e33b2e"/><circle cx="12" cy="12" r="5.4" fill="#fff"/><circle cx="12" cy="12" r="4.3" fill="#4285f4"/></svg>
<div style="left:1096.5px;top:1039.5px;width:15px;height:15px;background:#c8175d;border-radius:8px;"></div>
<span class="t" style="left:1100.66px;top:1041.5px;font-size:10px;color:#fff;">S</span>
<div style="left:1087.5px;top:1072px;width:15px;height:3px;background:#4cc2ff;border-radius:2px;"></div>
<svg style="left:1127px;top:1047px;" width="24" height="18" viewBox="0 0 24 18"><rect x="0.5" y="0.5" width="23" height="17" fill="#e4f2fb" stroke="#9fb6c6"/><path d="M1 16 L3 12 L5 13 L7 5 L9 11 L11 12 L13 10 L15 12 L17 4 L19 12 L21 13 L23 15 V17 H1Z" fill="#7fbfe8" stroke="#3f95d2" stroke-width="0.8"/></svg>
<svg style="left:1171px;top:1046px;" width="23" height="19" viewBox="0 0 23 19"><rect x="0" y="0" width="23" height="19" fill="#0c0c0c" stroke="#8a8a8a" stroke-width="1"/><rect x="0.5" y="0.5" width="22" height="2.6" fill="#9a9a9a"/><path d="M3 7.5 H7 M8.4 7.5 H10.4 M11.4 9 H17" stroke="#eaeaea" stroke-width="1.2"/></svg>
<svg style="left:1214px;top:1043px;" width="27" height="27" viewBox="0 0 27 27"><path d="M6 3 C9 0.8 17 0.6 21 3 C25 5.6 24.6 12 21.8 16.4 C20.8 18 19.2 17.6 19 16 L18.6 12 C18.4 14 18 19 17.4 22.6 C17 25.4 12.6 25.6 12.2 22.4 L11.6 16.4 C9 17 5.6 15 4.2 11 C3 7.6 3.6 4.8 6 3Z" fill="#6e8fb6" stroke="#e6edf5" stroke-width="1.1"/><path d="M12.6 4 C12 8 12.4 12 11.8 16 M17.6 4.4 C18.8 7 18.8 10 18.6 12" fill="none" stroke="#e6edf5" stroke-width="1"/><circle cx="15.4" cy="7.4" r="0.9" fill="#fff"/></svg>
<svg style="left:1259px;top:1044px;" width="25" height="25" viewBox="0 0 25 25"><path d="M18 1 L24 3.8 V21.2 L18 24 L6.2 13.6 L2.6 16.4 L1 15.4 V9.6 L2.6 8.6 L6.2 11.4Z" fill="#2196e6"/><path d="M18 1 L24 3.8 V21.2 L18 24Z" fill="#2aa9f3"/><path d="M18 7.2 L10.6 12.5 L18 17.8Z" fill="#1c1c1c"/><path d="M1 9.6 L2.6 8.6 L9 14 L6.2 16 L1 15.4Z" fill="#1277c4" opacity="0.6"/></svg>
<div style="left:1268px;top:1072px;width:6px;height:2.5px;background:#8a8a8a;border-radius:2px;"></div>
<svg style="left:1302px;top:1043px;" width="27" height="27" viewBox="0 0 27 27"><defs><linearGradient id="pg" x1="0" y1="0" x2="1" y2="1"><stop offset="0" stop-color="#21d789"/><stop offset="0.5" stop-color="#07c3f2"/><stop offset="1" stop-color="#fcf84a"/></linearGradient></defs><path d="M2 2 H21 L25 8 V20 L19 25 H6 L2 19Z" fill="url(#pg)"/><path d="M14 2 H21 L25 8 V20 L19 25Z" fill="#fcf84a" opacity="0.8"/><rect x="5" y="5" width="16" height="16" fill="#0b0b0b"/><rect x="7" y="17.4" width="6" height="1.2" fill="#fff"/></svg>
<span class="t" style="left:1308.6px;top:1051px;font-size:8px;color:#fff;font-weight:700;letter-spacing:-0.763px;">PC</span>
<svg style="left:1346px;top:1043px;" width="27" height="27" viewBox="0 0 27 27"><g transform="translate(13.5,13.5) rotate(45)"><rect x="-9" y="-9" width="8.6" height="8.6" rx="1" fill="#ee7a70"/><rect x="0.4" y="-9" width="8.6" height="8.6" rx="1" fill="#7cc25e"/><rect x="-9" y="0.4" width="8.6" height="8.6" rx="1" fill="#79a6ee"/><rect x="0.4" y="0.4" width="8.6" height="8.6" rx="1" fill="#f2d768"/></g><path d="M9 6 L17 14 M17 14 V20 M13.5 10.5 L18 8" stroke="#1c1c1c" stroke-width="1.6"/><circle cx="17" cy="14" r="1.6" fill="#1c1c1c"/></svg>
<div style="left:1391px;top:1044px;width:24px;height:24px;background:#fff;"></div>
<svg style="left:1395px;top:1046px;" width="16" height="14" viewBox="0 0 16 14"><rect x="1" y="1" width="14" height="9" rx="1" fill="none" stroke="#2f86c9" stroke-width="1.6"/><path d="M5 13 H11 M8 10 V13" stroke="#2f86c9" stroke-width="1.4"/><path d="M4 5.4 H9 M10 4 L12 5.6" stroke="#39a86b" stroke-width="1.4"/></svg>
<span class="t" style="left:1394.87px;top:1061.5px;font-size:4.5px;color:#555;">TaskPro</span>
<div style="left:1400px;top:1072px;width:6px;height:2.5px;background:#8a8a8a;border-radius:2px;"></div>
<svg style="left:1670px;top:1050px;" width="14" height="12" viewBox="0 0 14 12"><path d="M1.8 8.8 L7 3.6 L12.2 8.8" fill="none" stroke="#fff" stroke-width="1.5" stroke-linecap="round" stroke-linejoin="round"/></svg>
<svg style="left:1700px;top:1049px;" width="18" height="13" viewBox="0 0 18 13"><path d="M4.4 12 A3.6 3.6 0 0 1 4.2 4.9 A5 5 0 0 1 13.4 5.2 A3.5 3.5 0 0 1 13.6 12Z" fill="#e6e6e6"/><path d="M3 10.8 L11 4.4 L13.4 5.2 L6 12 H4.4Z" fill="#b5b5b5"/></svg>
<svg style="left:1732px;top:1049px;" width="18" height="13" viewBox="0 0 18 13"><rect x="0.8" y="0.8" width="16.4" height="11.4" rx="1.6" fill="none" stroke="#fff" stroke-width="1.2"/><path d="M3.4 4 H4.6 M6.2 4 H7.4 M9 4 H10.2 M11.8 4 H13 M3.4 6.4 H4.6 M6.2 6.4 H7.4 M9 6.4 H10.2 M11.8 6.4 H13 M14 4 H14.8 M5 9.2 H13" stroke="#fff" stroke-width="1.2"/></svg>
<svg style="left:1764px;top:1047px;" width="18" height="16" viewBox="0 0 18 16"><path d="M1.4 6 A10.8 10.8 0 0 1 16.6 6 M3.8 8.6 A7.4 7.4 0 0 1 14.2 8.6 M6.2 11.1 A4 4 0 0 1 11.8 11.1" fill="none" stroke="#fff" stroke-width="1.3" stroke-linecap="round"/><circle cx="9" cy="13.6" r="1.2" fill="#fff"/></svg>
<svg style="left:1788px;top:1048px;" width="19" height="16" viewBox="0 0 19 16"><path d="M1.2 5.6 H4 L7.6 2.2 V13.8 L4 10.4 H1.2Z" fill="none" stroke="#fff" stroke-width="1.2" stroke-linejoin="round"/><path d="M10 5.4 A3.6 3.6 0 0 1 10 10.6 M12.2 3.4 A6.4 6.4 0 0 1 12.2 12.6 M14.4 1.6 A9 9 0 0 1 14.4 14.4" fill="none" stroke="#fff" stroke-width="1.2" stroke-linecap="round"/></svg>
<span class="t" style="left:1827.7px;top:1041px;font-size:12px;color:#fff;letter-spacing:-0.347px;">12:50 PM</span>
<span class="t" style="left:1821.9px;top:1057px;font-size:12px;color:#fff;letter-spacing:0.112px;">12/4/2025</span>
<svg style="left:1884px;top:1048px;" width="16" height="18" viewBox="0 0 16 18"><path d="M8 1.2 A4.8 4.8 0 0 1 12.8 6 V9.6 L14.4 12.6 H1.6 L3.2 9.6 V6 A4.8 4.8 0 0 1 8 1.2Z" fill="#6fd3f7"/><path d="M6 14 A2 2 0 0 0 10 14Z" fill="#6fd3f7"/></svg>
</body></html>
